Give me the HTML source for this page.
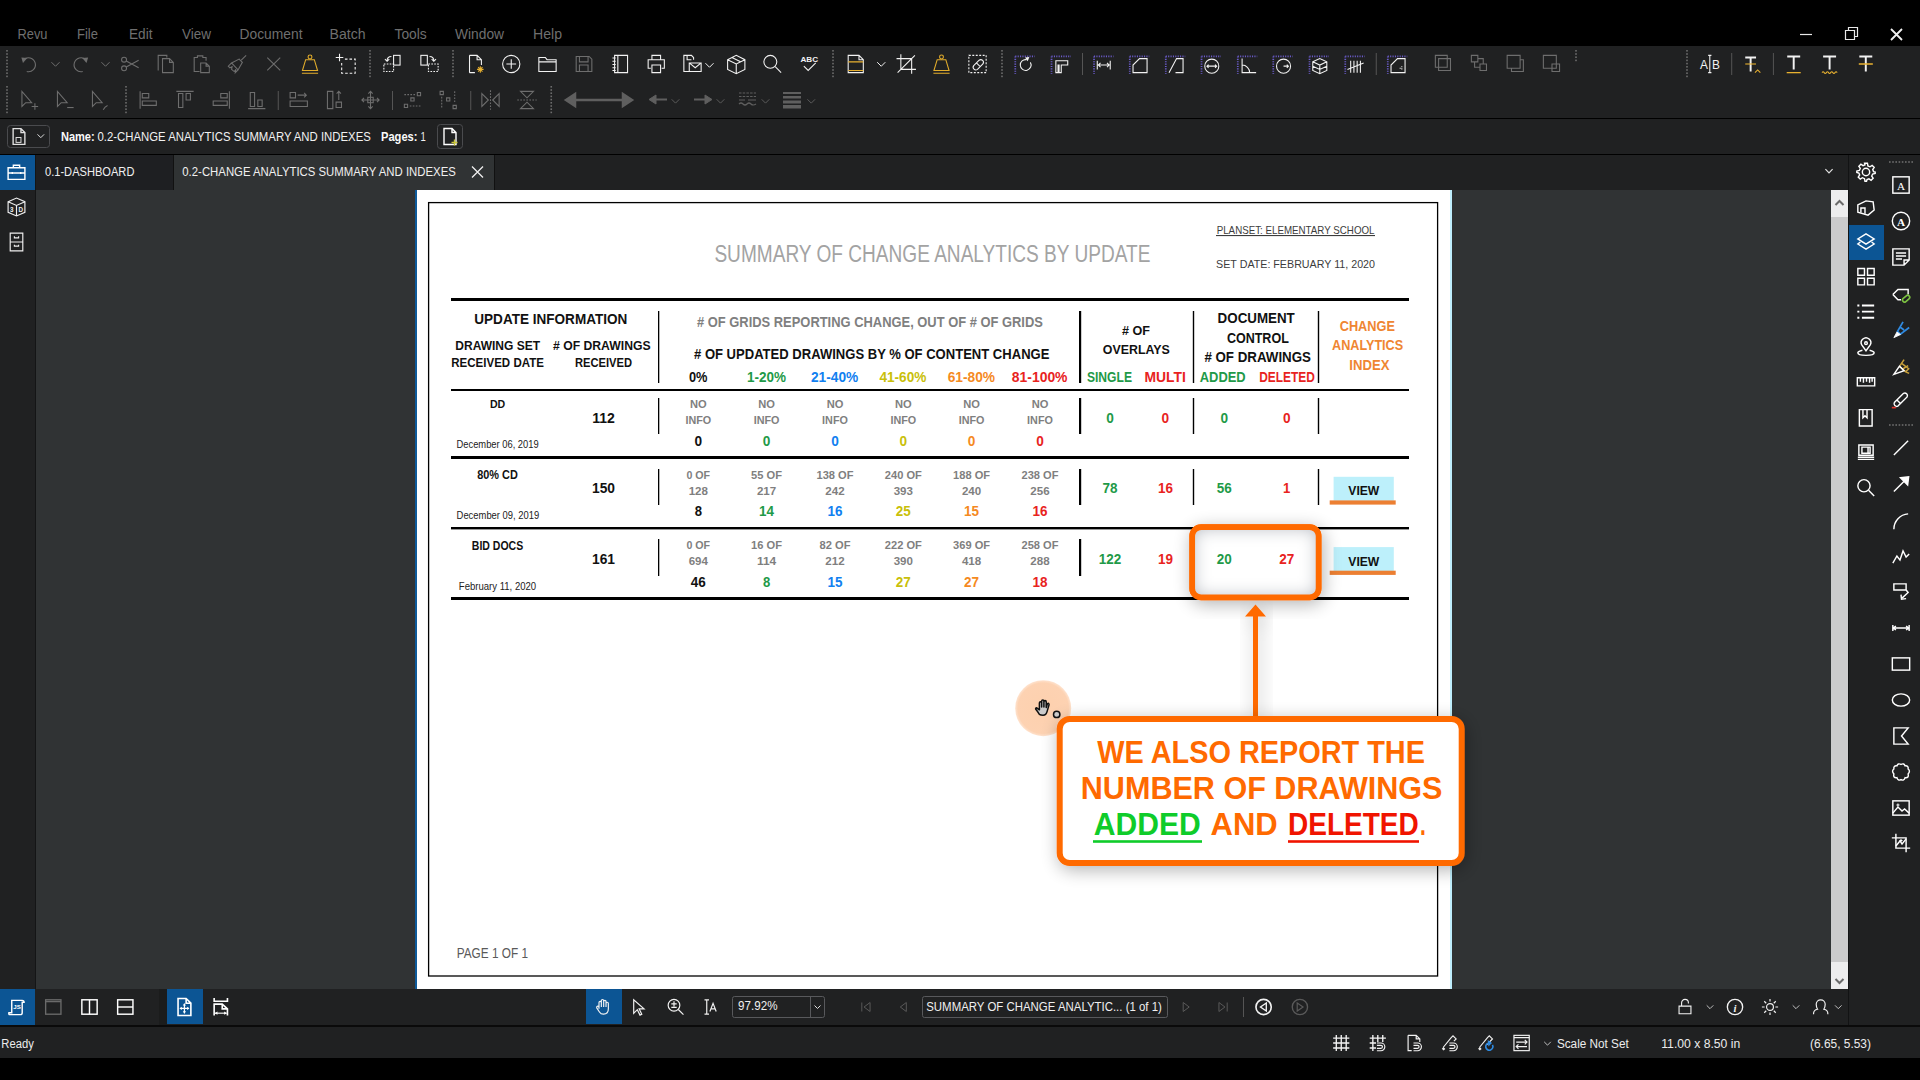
<!DOCTYPE html>
<html><head><meta charset="utf-8"><title>Revu</title>
<style>html,body{margin:0;padding:0;background:#000;width:1920px;height:1080px;overflow:hidden}svg{display:block}</style>
</head><body>
<svg width="1920" height="1080" viewBox="0 0 1920 1080">
<defs>
<filter id="shadow" x="-30%" y="-30%" width="160%" height="160%"><feGaussianBlur in="SourceAlpha" stdDeviation="9"/><feOffset dx="2" dy="4"/><feComponentTransfer><feFuncA type="linear" slope="0.3"/></feComponentTransfer><feMerge><feMergeNode/><feMergeNode in="SourceGraphic"/></feMerge></filter>
<filter id="inset" x="-30%" y="-30%" width="160%" height="160%"><feFlood flood-color="#b8bcc4" result="f"/><feComposite in="f" in2="SourceAlpha" operator="out" result="o"/><feGaussianBlur in="o" stdDeviation="8" result="b"/><feComposite in="b" in2="SourceAlpha" operator="in" result="i"/><feMerge><feMergeNode in="SourceGraphic"/><feMergeNode in="i"/></feMerge></filter>
</defs>
<rect x="0" y="0" width="1920" height="1080" fill="#000" />
<rect x="0" y="46" width="1920" height="72" fill="#202122" />
<rect x="0" y="118" width="1920" height="1" fill="#000" />
<rect x="0" y="119" width="1920" height="35" fill="#202122" />
<rect x="0" y="154" width="1920" height="1" fill="#000" />
<rect x="0" y="155" width="1848" height="35" fill="#202122" />
<rect x="0" y="155" width="1920" height="870" fill="#202122" />
<rect x="36" y="190" width="1795" height="799" fill="#303334" />
<rect x="35" y="155" width="1" height="834" fill="#141516" />
<rect x="1848" y="155" width="1" height="870" fill="#121314" />
<rect x="0" y="989" width="1848" height="36" fill="#202122" />
<rect x="0" y="1025" width="1920" height="2" fill="#0a0a0a" />
<rect x="0" y="1027" width="1920" height="31" fill="#202122" />
<rect x="0" y="1058" width="1920" height="22" fill="#000" />
<text x="17.50" y="39.30" font-family="Liberation Sans" font-size="14.24" font-weight="normal" fill="#6f6f6f" text-anchor="start" textLength="30.00" lengthAdjust="spacingAndGlyphs" >Revu</text>
<text x="77.00" y="39.30" font-family="Liberation Sans" font-size="14.24" font-weight="normal" fill="#6f6f6f" text-anchor="start" textLength="21.00" lengthAdjust="spacingAndGlyphs" >File</text>
<text x="129.00" y="39.30" font-family="Liberation Sans" font-size="14.24" font-weight="normal" fill="#6f6f6f" text-anchor="start" textLength="23.50" lengthAdjust="spacingAndGlyphs" >Edit</text>
<text x="182.00" y="39.30" font-family="Liberation Sans" font-size="14.24" font-weight="normal" fill="#6f6f6f" text-anchor="start" textLength="29.00" lengthAdjust="spacingAndGlyphs" >View</text>
<text x="239.50" y="39.30" font-family="Liberation Sans" font-size="14.24" font-weight="normal" fill="#6f6f6f" text-anchor="start" textLength="63.00" lengthAdjust="spacingAndGlyphs" >Document</text>
<text x="329.50" y="39.30" font-family="Liberation Sans" font-size="14.24" font-weight="normal" fill="#6f6f6f" text-anchor="start" textLength="36.00" lengthAdjust="spacingAndGlyphs" >Batch</text>
<text x="394.50" y="39.30" font-family="Liberation Sans" font-size="14.24" font-weight="normal" fill="#6f6f6f" text-anchor="start" textLength="32.25" lengthAdjust="spacingAndGlyphs" >Tools</text>
<text x="455.00" y="39.30" font-family="Liberation Sans" font-size="14.24" font-weight="normal" fill="#6f6f6f" text-anchor="start" textLength="49.00" lengthAdjust="spacingAndGlyphs" >Window</text>
<text x="533.00" y="39.30" font-family="Liberation Sans" font-size="14.24" font-weight="normal" fill="#6f6f6f" text-anchor="start" textLength="29.00" lengthAdjust="spacingAndGlyphs" >Help</text>
<path d="M1800 34.5 H1812" stroke="#e8e8e8" stroke-width="1.2"/>
<g fill="none" stroke="#e8e8e8" stroke-width="1.2"><path d="M1845.5 30.5 H1854.5 V39.5 H1845.5 Z M1848.5 30.5 V27.5 H1857.5 V36.5 H1854.5"/></g>
<path d="M1891 29 L1902 40 M1902 29 L1891 40" stroke="#f0f0f0" stroke-width="1.8"/>
<rect x="6.20" y="50.00" width="1.6" height="1.6" fill="#6d6d6d"/>
<rect x="6.20" y="53.20" width="1.6" height="1.6" fill="#6d6d6d"/>
<rect x="6.20" y="56.40" width="1.6" height="1.6" fill="#6d6d6d"/>
<rect x="6.20" y="59.60" width="1.6" height="1.6" fill="#6d6d6d"/>
<rect x="6.20" y="62.80" width="1.6" height="1.6" fill="#6d6d6d"/>
<rect x="6.20" y="66.00" width="1.6" height="1.6" fill="#6d6d6d"/>
<rect x="6.20" y="69.20" width="1.6" height="1.6" fill="#6d6d6d"/>
<rect x="6.20" y="72.40" width="1.6" height="1.6" fill="#6d6d6d"/>
<rect x="6.20" y="75.60" width="1.6" height="1.6" fill="#6d6d6d"/>
<g style="color:#6e6e6e"><g transform="translate(19.20,53.20) scale(1.08)" fill="none" stroke="#6e6e6e" stroke-width="1.0" stroke-linecap="butt" stroke-linejoin="miter"><path d="M4 6 A6.5 6.5 0 1 1 7 17"/><path d="M2 4 L7.5 4.5 L3.5 9 Z" fill="currentColor" stroke="none"/></g></g>
<g style="color:#6e6e6e"><g transform="translate(46.50,55.00) scale(0.9)" fill="none" stroke="#6e6e6e" stroke-width="1.1" stroke-linecap="butt" stroke-linejoin="miter"><path d="M5.5 8 L10 12.5 L14.5 8"/></g></g>
<g style="color:#6e6e6e"><g transform="translate(68.70,53.20) scale(1.08)" fill="none" stroke="#6e6e6e" stroke-width="1.0" stroke-linecap="butt" stroke-linejoin="miter"><path d="M16 6 A6.5 6.5 0 1 0 13 17"/><path d="M18 4 L12.5 4.5 L16.5 9 Z" fill="currentColor" stroke="none"/></g></g>
<g style="color:#6e6e6e"><g transform="translate(96.50,55.00) scale(0.9)" fill="none" stroke="#6e6e6e" stroke-width="1.1" stroke-linecap="butt" stroke-linejoin="miter"><path d="M5.5 8 L10 12.5 L14.5 8"/></g></g>
<g style="color:#6e6e6e"><g transform="translate(119.20,53.20) scale(1.08)" fill="none" stroke="#6e6e6e" stroke-width="1.0" stroke-linecap="butt" stroke-linejoin="miter"><circle cx="4.5" cy="6" r="2.3"/><circle cx="4.5" cy="14" r="2.3"/><path d="M6.5 7.2 L18 13.5 M6.5 12.8 L18 6.5"/></g></g>
<g style="color:#6e6e6e"><g transform="translate(154.95,53.20) scale(1.08)" fill="none" stroke="#6e6e6e" stroke-width="1.0" stroke-linecap="butt" stroke-linejoin="miter"><path d="M3 16 V2 H11 V4"/><path d="M7 5 H13.5 L17 8.5 V18 H7 Z M13.5 5 V8.5 H17"/></g></g>
<g style="color:#6e6e6e"><g transform="translate(190.95,53.20) scale(1.08)" fill="none" stroke="#6e6e6e" stroke-width="1.0" stroke-linecap="butt" stroke-linejoin="miter"><path d="M8 17 H3 V4 H6 V2.5 H11 V4 H14 V7"/><path d="M9 9 H14 L17 12 V18 H9 Z M14 9 V12 H17"/></g></g>
<g style="color:#6e6e6e"><g transform="translate(226.70,53.20) scale(1.08)" fill="none" stroke="#6e6e6e" stroke-width="1.0" stroke-linecap="butt" stroke-linejoin="miter"><path d="M18 2 L13.5 6.5 M11.5 5.5 L14.5 8.5 M4.5 9 L11.5 5.5 L14.5 8.5 L10.5 15.5 Z M4.5 9 L1.5 12 L3 13.5 L5 12.5 L4.5 15 L7 17 L8.5 15 L8 18 L10.5 15.5"/></g></g>
<g style="color:#6e6e6e"><g transform="translate(262.95,53.20) scale(1.08)" fill="none" stroke="#6e6e6e" stroke-width="1.0" stroke-linecap="butt" stroke-linejoin="miter"><path d="M4 4 L16 16 M16 4 L4 16"/></g></g>
<g style="color:#e2ad2c"><g transform="translate(299.20,53.20) scale(1.08)" fill="none" stroke="#e2ad2c" stroke-width="1.0" stroke-linecap="butt" stroke-linejoin="miter"><circle cx="10" cy="3.5" r="1.8"/><path d="M6 6 H14 L17 16 H3 Z M2.5 18.5 H17.5"/></g></g>
<g style="color:#f2f2f2"><g transform="translate(335.20,53.20) scale(1.08)" fill="none" stroke="#f2f2f2" stroke-width="1.0" stroke-linecap="butt" stroke-linejoin="miter"><path d="M4 0.5 V7.5 M0.5 4 H7.5" /><path d="M9 5.5 H18.5 V18.5 H6 V9" stroke-dasharray="2.4 1.8"/></g></g>
<g style="color:#f2f2f2"><g transform="translate(381.70,53.20) scale(1.08)" fill="none" stroke="#f2f2f2" stroke-width="1.0" stroke-linecap="butt" stroke-linejoin="miter"><rect x="11" y="2" width="6" height="9"/><path d="M2 10 H11 V17 H2 Z" stroke-dasharray="1.5 1.2"/><path d="M9 3 Q5 3 5 7 M3 5.5 L5 7.5 L7 5.5"/></g></g>
<g style="color:#f2f2f2"><g transform="translate(418.70,53.20) scale(1.08)" fill="none" stroke="#f2f2f2" stroke-width="1.0" stroke-linecap="butt" stroke-linejoin="miter"><rect x="2" y="2" width="6" height="9"/><path d="M9 10 H18 V17 H9 Z" stroke-dasharray="1.5 1.2"/><path d="M10 3 Q14 3 14 7 M12 5.5 L14 7.5 L16 5.5"/></g></g>
<g style="color:#f2f2f2"><g transform="translate(465.20,53.20) scale(1.08)" fill="none" stroke="#f2f2f2" stroke-width="1.0" stroke-linecap="butt" stroke-linejoin="miter"><path d="M4 2 H11 L15 6 V11 M9 18 H4 Z M4 2 V18 M11 2 V6 H15"/><path d="M14 12 V18 M11 15 H17 M12 13 L16 17 M16 13 L12 17" stroke="#e8b130"/></g></g>
<g style="color:#f2f2f2"><g transform="translate(500.45,53.20) scale(1.08)" fill="none" stroke="#f2f2f2" stroke-width="1.0" stroke-linecap="butt" stroke-linejoin="miter"><circle cx="10" cy="10" r="8"/><path d="M10 5.5 V14.5 M5.5 10 H14.5"/></g></g>
<g style="color:#f2f2f2"><g transform="translate(536.70,53.20) scale(1.08)" fill="none" stroke="#f2f2f2" stroke-width="1.0" stroke-linecap="butt" stroke-linejoin="miter"><path d="M2 4 H8 L9.5 6 H18 V17 H2 Z M2 8 H18"/></g></g>
<g style="color:#6e6e6e"><g transform="translate(572.95,53.20) scale(1.08)" fill="none" stroke="#6e6e6e" stroke-width="1.0" stroke-linecap="butt" stroke-linejoin="miter"><path d="M3 3 H15 L17.5 5.5 V17 H3 Z M6 3 V8 H14 V3 M6 17 V11 H14 V17"/></g></g>
<g style="color:#f2f2f2"><g transform="translate(609.20,53.20) scale(1.08)" fill="none" stroke="#f2f2f2" stroke-width="1.0" stroke-linecap="butt" stroke-linejoin="miter"><path d="M5 2 H17 V18 H5 Z M8 2 V18"/><path d="M3 4.5 H6 M3 7.5 H6 M3 10.5 H6 M3 13.5 H6 M3 16 H6"/></g></g>
<g style="color:#f2f2f2"><g transform="translate(645.45,53.20) scale(1.08)" fill="none" stroke="#f2f2f2" stroke-width="1.0" stroke-linecap="butt" stroke-linejoin="miter"><path d="M6 6 V2 H14 V6 M5 14 H2.5 V6 H17.5 V14 H15 M6 11 H14 V18 H6 Z"/></g></g>
<g style="color:#f2f2f2"><g transform="translate(681.70,53.20) scale(1.08)" fill="none" stroke="#f2f2f2" stroke-width="1.0" stroke-linecap="butt" stroke-linejoin="miter"><path d="M7 17 H2 V2 H9 L11 4 V6 M5 2 V6 H9"/><path d="M7 9 H18 V17 H7 Z M7 9 L12.5 13.5 L18 9"/></g></g>
<g style="color:#f2f2f2"><g transform="translate(725.45,53.20) scale(1.08)" fill="none" stroke="#f2f2f2" stroke-width="1.0" stroke-linecap="butt" stroke-linejoin="miter"><path d="M2 6 L10 2 L18 6 V15 L10 19 L2 15 Z M2 6 L10 10 L18 6 M10 10 V19 M6 4 L14 8"/></g></g>
<g style="color:#f2f2f2"><g transform="translate(761.70,53.20) scale(1.08)" fill="none" stroke="#f2f2f2" stroke-width="1.0" stroke-linecap="butt" stroke-linejoin="miter"><circle cx="8" cy="8" r="6"/><path d="M12.5 12.5 L18 18"/></g></g>
<g style="color:#f2f2f2"><g transform="translate(798.45,53.20) scale(1.08)" fill="none" stroke="#f2f2f2" stroke-width="1.0" stroke-linecap="butt" stroke-linejoin="miter"><text x="10" y="8" font-size="7.5" font-weight="bold" font-family="Liberation Sans" text-anchor="middle" fill="currentColor" stroke="none">ABC</text><path d="M5 12 L9 16 L16 9"/></g></g>
<g style="color:#f2f2f2"><g transform="translate(844.95,53.20) scale(1.08)" fill="none" stroke="#f2f2f2" stroke-width="1.0" stroke-linecap="butt" stroke-linejoin="miter"><path d="M3 2 H13 L17 6 V18 H3 Z M13 2 V6 H17"/><path d="M3 8 H17 M3 16 H17" stroke="#e8b130"/></g></g>
<g style="color:#f2f2f2"><g transform="translate(872.25,55.00) scale(0.9)" fill="none" stroke="#f2f2f2" stroke-width="1.1" stroke-linecap="butt" stroke-linejoin="miter"><path d="M5.5 8 L10 12.5 L14.5 8"/></g></g>
<g style="color:#f2f2f2"><g transform="translate(895.45,53.20) scale(1.08)" fill="none" stroke="#f2f2f2" stroke-width="1.0" stroke-linecap="butt" stroke-linejoin="miter"><path d="M5 1 V15 H19 M1 5 H15 V19 M18 2 L2 18"/></g></g>
<g style="color:#e2ad2c"><g transform="translate(930.70,53.20) scale(1.08)" fill="none" stroke="#e2ad2c" stroke-width="1.0" stroke-linecap="butt" stroke-linejoin="miter"><circle cx="10" cy="3.5" r="1.8"/><path d="M6 6 H14 L17 16 H3 Z M2.5 18.5 H17.5"/></g></g>
<g style="color:#f2f2f2"><g transform="translate(966.70,53.20) scale(1.08)" fill="none" stroke="#f2f2f2" stroke-width="1.0" stroke-linecap="butt" stroke-linejoin="miter"><path d="M2 2 H18 V18 H2 Z" stroke-dasharray="1.8 1.4"/><path d="M6.5 11.5 L11.5 6.5 A2.5 2.5 0 0 1 15 10 L10 15 A2.5 2.5 0 0 1 6.5 11.5 Z M9 9 L12.5 12.5"/></g></g>
<g style="color:#f2f2f2"><g transform="translate(1014.20,53.20) scale(1.08)" fill="none" stroke="#f2f2f2" stroke-width="1.0" stroke-linecap="butt" stroke-linejoin="miter"><path d="M1 3 V19 M1 3 H19" stroke="#6b5ccc" stroke-dasharray="1 1.2" stroke-width="1.6"/><path d="M15 8.5 A5 5 0 1 1 11.5 6"/><path d="M10 4 L14 3.5 L12.5 7.5 Z" fill="currentColor" stroke="none"/></g></g>
<g style="color:#f2f2f2"><g transform="translate(1050.45,53.20) scale(1.08)" fill="none" stroke="#f2f2f2" stroke-width="1.0" stroke-linecap="butt" stroke-linejoin="miter"><path d="M1 3 V19 M1 3 H19" stroke="#6b5ccc" stroke-dasharray="1 1.2" stroke-width="1.6"/><path d="M5 7 H16 V11 H10 V18 H8 V11 H7 V18 H5 Z"/></g></g>
<g style="color:#f2f2f2"><g transform="translate(1092.95,53.20) scale(1.08)" fill="none" stroke="#f2f2f2" stroke-width="1.0" stroke-linecap="butt" stroke-linejoin="miter"><path d="M1 3 V19 M1 3 H19" stroke="#6b5ccc" stroke-dasharray="1 1.2" stroke-width="1.6"/><path d="M4 7 V15 M16 7 V15 M5 11 H15 M7 9 L5 11 L7 13 M13 9 L15 11 L13 13"/></g></g>
<g style="color:#f2f2f2"><g transform="translate(1128.70,53.20) scale(1.08)" fill="none" stroke="#f2f2f2" stroke-width="1.0" stroke-linecap="butt" stroke-linejoin="miter"><path d="M1 3 V19 M1 3 H19" stroke="#6b5ccc" stroke-dasharray="1 1.2" stroke-width="1.6"/><path d="M4 18 V11 L10 5 H17 V18 Z"/></g></g>
<g style="color:#f2f2f2"><g transform="translate(1164.70,53.20) scale(1.08)" fill="none" stroke="#f2f2f2" stroke-width="1.0" stroke-linecap="butt" stroke-linejoin="miter"><path d="M1 3 V19 M1 3 H19" stroke="#6b5ccc" stroke-dasharray="1 1.2" stroke-width="1.6"/><path d="M4 18 L11 5 H17 V18 H10"/></g></g>
<g style="color:#f2f2f2"><g transform="translate(1200.45,53.20) scale(1.08)" fill="none" stroke="#f2f2f2" stroke-width="1.0" stroke-linecap="butt" stroke-linejoin="miter"><path d="M1 3 V19 M1 3 H19" stroke="#6b5ccc" stroke-dasharray="1 1.2" stroke-width="1.6"/><circle cx="10.5" cy="12" r="6.5"/><path d="M6 12 H15 M7.5 10.5 L6 12 L7.5 13.5 M13.5 10.5 L15 12 L13.5 13.5"/></g></g>
<g style="color:#f2f2f2"><g transform="translate(1236.70,53.20) scale(1.08)" fill="none" stroke="#f2f2f2" stroke-width="1.0" stroke-linecap="butt" stroke-linejoin="miter"><path d="M1 3 V19 M1 3 H19" stroke="#6b5ccc" stroke-dasharray="1 1.2" stroke-width="1.6"/><path d="M5 5 V18 H18 M5 11 A7 7 0 0 1 12 18"/></g></g>
<g style="color:#f2f2f2"><g transform="translate(1272.20,53.20) scale(1.08)" fill="none" stroke="#f2f2f2" stroke-width="1.0" stroke-linecap="butt" stroke-linejoin="miter"><path d="M1 3 V19 M1 3 H19" stroke="#6b5ccc" stroke-dasharray="1 1.2" stroke-width="1.6"/><circle cx="10.5" cy="12" r="6.5"/><path d="M10.5 12 H15 M13.5 10.5 L15 12 L13.5 13.5"/></g></g>
<g style="color:#f2f2f2"><g transform="translate(1308.45,53.20) scale(1.08)" fill="none" stroke="#f2f2f2" stroke-width="1.0" stroke-linecap="butt" stroke-linejoin="miter"><path d="M1 3 V19 M1 3 H19" stroke="#6b5ccc" stroke-dasharray="1 1.2" stroke-width="1.6"/><path d="M4 8 L10.5 5 L17 8 V16 L10.5 19 L4 16 Z M4 8 L10.5 11 L17 8 M10.5 11 V19 M4 12 L10.5 15 L17 12"/></g></g>
<g style="color:#f2f2f2"><g transform="translate(1344.20,53.20) scale(1.08)" fill="none" stroke="#f2f2f2" stroke-width="1.0" stroke-linecap="butt" stroke-linejoin="miter"><path d="M1 3 V19 M1 3 H19" stroke="#6b5ccc" stroke-dasharray="1 1.2" stroke-width="1.6"/><path d="M6 7 V18 M9 7 V18 M12 7 V18 M15 7 V18 M3 15 L18 9"/></g></g>
<g style="color:#f2f2f2"><g transform="translate(1386.70,53.20) scale(1.08)" fill="none" stroke="#f2f2f2" stroke-width="1.0" stroke-linecap="butt" stroke-linejoin="miter"><path d="M1 3 V19 M1 3 H19" stroke="#6b5ccc" stroke-dasharray="1 1.2" stroke-width="1.6"/><path d="M4 18 V11 L10 5 H17 V18 Z"/><path d="M12 14 H14 M14 12 V16" stroke-dasharray="1 1"/></g></g>
<g style="color:#6e6e6e"><g transform="translate(1433.20,53.20) scale(1.08)" fill="none" stroke="#6e6e6e" stroke-width="1.0" stroke-linecap="butt" stroke-linejoin="miter"><path d="M2 2 H13 V13 H2 Z M5 5 H16 V16 H5 Z"/></g></g>
<g style="color:#6e6e6e"><g transform="translate(1469.20,53.20) scale(1.08)" fill="none" stroke="#6e6e6e" stroke-width="1.0" stroke-linecap="butt" stroke-linejoin="miter"><path d="M2 2 H8 V8 H2 Z M10 10 H16 V16 H10 Z M5 8 V13 H10 M8 5 H13 V10"/></g></g>
<g style="color:#6e6e6e"><g transform="translate(1505.00,53.20) scale(1.08)" fill="none" stroke="#6e6e6e" stroke-width="1.0" stroke-linecap="butt" stroke-linejoin="miter"><path d="M2 2 H14 V14 H2 Z M14 6 H17 V17 H6 V14"/></g></g>
<g style="color:#6e6e6e"><g transform="translate(1541.20,53.20) scale(1.08)" fill="none" stroke="#6e6e6e" stroke-width="1.0" stroke-linecap="butt" stroke-linejoin="miter"><path d="M2 2 H14 V14 H2 Z M10 10 H17 V17 H10 Z"/></g></g>
<g style="color:#f2f2f2"><g transform="translate(1699.00,53.20) scale(1.08)" fill="none" stroke="#f2f2f2" stroke-width="1.0" stroke-linecap="butt" stroke-linejoin="miter"><text x="1" y="15" font-size="11" font-family="Liberation Sans" fill="currentColor" stroke="none">A</text><text x="12" y="15" font-size="11" font-family="Liberation Sans" fill="currentColor" stroke="none">B</text><path d="M8.5 2 H11.5 M10 2 V18 M8.5 18 H11.5"/></g></g>
<g style="color:#f2f2f2"><g transform="translate(1742.00,53.20) scale(1.08)" fill="none" stroke="#f2f2f2" stroke-width="1.0" stroke-linecap="butt" stroke-linejoin="miter"><path d="M3 4 H13 M8 4 V17" stroke-width="1.8"/><path d="M3 10 H13" stroke="#e8b130"/><path d="M12 18 L14.5 15.5 L17 18" stroke="#e8b130"/></g></g>
<g style="color:#f2f2f2"><g transform="translate(1782.90,53.20) scale(1.08)" fill="none" stroke="#f2f2f2" stroke-width="1.0" stroke-linecap="butt" stroke-linejoin="miter"><path d="M4 3 H16 M10 3 V15" stroke-width="1.8"/><path d="M3.5 18 H16.5" stroke="#e8b130" stroke-width="1.2"/></g></g>
<g style="color:#f2f2f2"><g transform="translate(1818.80,53.20) scale(1.08)" fill="none" stroke="#f2f2f2" stroke-width="1.0" stroke-linecap="butt" stroke-linejoin="miter"><path d="M4 3 H16 M10 3 V15" stroke-width="1.8"/><path d="M3 18 Q4 16.5 5 18 Q6 19.5 7 18 Q8 16.5 9 18 Q10 19.5 11 18 Q12 16.5 13 18 Q14 19.5 15 18 Q16 16.5 17 18" stroke="#e8b130" stroke-width="1"/></g></g>
<g style="color:#f2f2f2"><g transform="translate(1855.00,53.20) scale(1.08)" fill="none" stroke="#f2f2f2" stroke-width="1.0" stroke-linecap="butt" stroke-linejoin="miter"><path d="M4 3 H16 M10 3 V17" stroke-width="1.8"/><path d="M3.5 10 H16.5" stroke="#e8b130" stroke-width="1.4"/></g></g>
<g style="color:#f2f2f2"><g transform="translate(700.50,56.00) scale(0.9)" fill="none" stroke="#f2f2f2" stroke-width="1.1" stroke-linecap="butt" stroke-linejoin="miter"><path d="M5.5 8 L10 12.5 L14.5 8"/></g></g>
<rect x="369.20" y="50.00" width="1.6" height="1.6" fill="#6d6d6d"/>
<rect x="369.20" y="53.20" width="1.6" height="1.6" fill="#6d6d6d"/>
<rect x="369.20" y="56.40" width="1.6" height="1.6" fill="#6d6d6d"/>
<rect x="369.20" y="59.60" width="1.6" height="1.6" fill="#6d6d6d"/>
<rect x="369.20" y="62.80" width="1.6" height="1.6" fill="#6d6d6d"/>
<rect x="369.20" y="66.00" width="1.6" height="1.6" fill="#6d6d6d"/>
<rect x="369.20" y="69.20" width="1.6" height="1.6" fill="#6d6d6d"/>
<rect x="369.20" y="72.40" width="1.6" height="1.6" fill="#6d6d6d"/>
<rect x="369.20" y="75.60" width="1.6" height="1.6" fill="#6d6d6d"/>
<rect x="452.20" y="50.00" width="1.6" height="1.6" fill="#6d6d6d"/>
<rect x="452.20" y="53.20" width="1.6" height="1.6" fill="#6d6d6d"/>
<rect x="452.20" y="56.40" width="1.6" height="1.6" fill="#6d6d6d"/>
<rect x="452.20" y="59.60" width="1.6" height="1.6" fill="#6d6d6d"/>
<rect x="452.20" y="62.80" width="1.6" height="1.6" fill="#6d6d6d"/>
<rect x="452.20" y="66.00" width="1.6" height="1.6" fill="#6d6d6d"/>
<rect x="452.20" y="69.20" width="1.6" height="1.6" fill="#6d6d6d"/>
<rect x="452.20" y="72.40" width="1.6" height="1.6" fill="#6d6d6d"/>
<rect x="452.20" y="75.60" width="1.6" height="1.6" fill="#6d6d6d"/>
<rect x="832.20" y="50.00" width="1.6" height="1.6" fill="#6d6d6d"/>
<rect x="832.20" y="53.20" width="1.6" height="1.6" fill="#6d6d6d"/>
<rect x="832.20" y="56.40" width="1.6" height="1.6" fill="#6d6d6d"/>
<rect x="832.20" y="59.60" width="1.6" height="1.6" fill="#6d6d6d"/>
<rect x="832.20" y="62.80" width="1.6" height="1.6" fill="#6d6d6d"/>
<rect x="832.20" y="66.00" width="1.6" height="1.6" fill="#6d6d6d"/>
<rect x="832.20" y="69.20" width="1.6" height="1.6" fill="#6d6d6d"/>
<rect x="832.20" y="72.40" width="1.6" height="1.6" fill="#6d6d6d"/>
<rect x="832.20" y="75.60" width="1.6" height="1.6" fill="#6d6d6d"/>
<rect x="1001.20" y="50.00" width="1.6" height="1.6" fill="#6d6d6d"/>
<rect x="1001.20" y="53.20" width="1.6" height="1.6" fill="#6d6d6d"/>
<rect x="1001.20" y="56.40" width="1.6" height="1.6" fill="#6d6d6d"/>
<rect x="1001.20" y="59.60" width="1.6" height="1.6" fill="#6d6d6d"/>
<rect x="1001.20" y="62.80" width="1.6" height="1.6" fill="#6d6d6d"/>
<rect x="1001.20" y="66.00" width="1.6" height="1.6" fill="#6d6d6d"/>
<rect x="1001.20" y="69.20" width="1.6" height="1.6" fill="#6d6d6d"/>
<rect x="1001.20" y="72.40" width="1.6" height="1.6" fill="#6d6d6d"/>
<rect x="1001.20" y="75.60" width="1.6" height="1.6" fill="#6d6d6d"/>
<rect x="1575.20" y="50.00" width="1.6" height="1.6" fill="#6d6d6d"/>
<rect x="1575.20" y="53.20" width="1.6" height="1.6" fill="#6d6d6d"/>
<rect x="1575.20" y="56.40" width="1.6" height="1.6" fill="#6d6d6d"/>
<rect x="1575.20" y="59.60" width="1.6" height="1.6" fill="#6d6d6d"/>
<rect x="1686.20" y="50.00" width="1.6" height="1.6" fill="#6d6d6d"/>
<rect x="1686.20" y="53.20" width="1.6" height="1.6" fill="#6d6d6d"/>
<rect x="1686.20" y="56.40" width="1.6" height="1.6" fill="#6d6d6d"/>
<rect x="1686.20" y="59.60" width="1.6" height="1.6" fill="#6d6d6d"/>
<rect x="1686.20" y="62.80" width="1.6" height="1.6" fill="#6d6d6d"/>
<rect x="1686.20" y="66.00" width="1.6" height="1.6" fill="#6d6d6d"/>
<rect x="1686.20" y="69.20" width="1.6" height="1.6" fill="#6d6d6d"/>
<rect x="1686.20" y="72.40" width="1.6" height="1.6" fill="#6d6d6d"/>
<rect x="1686.20" y="75.60" width="1.6" height="1.6" fill="#6d6d6d"/>
<rect x="1082.0" y="53" width="1" height="22" fill="#555" />
<rect x="1375.75" y="53" width="1" height="22" fill="#555" />
<rect x="1731.2" y="53" width="1" height="22" fill="#555" />
<rect x="1772.9" y="53" width="1" height="22" fill="#555" />
<rect x="6.20" y="86.00" width="1.6" height="1.6" fill="#6d6d6d"/>
<rect x="6.20" y="89.20" width="1.6" height="1.6" fill="#6d6d6d"/>
<rect x="6.20" y="92.40" width="1.6" height="1.6" fill="#6d6d6d"/>
<rect x="6.20" y="95.60" width="1.6" height="1.6" fill="#6d6d6d"/>
<rect x="6.20" y="98.80" width="1.6" height="1.6" fill="#6d6d6d"/>
<rect x="6.20" y="102.00" width="1.6" height="1.6" fill="#6d6d6d"/>
<rect x="6.20" y="105.20" width="1.6" height="1.6" fill="#6d6d6d"/>
<rect x="6.20" y="108.40" width="1.6" height="1.6" fill="#6d6d6d"/>
<rect x="6.20" y="111.60" width="1.6" height="1.6" fill="#6d6d6d"/>
<rect x="125.20" y="86.00" width="1.6" height="1.6" fill="#6d6d6d"/>
<rect x="125.20" y="89.20" width="1.6" height="1.6" fill="#6d6d6d"/>
<rect x="125.20" y="92.40" width="1.6" height="1.6" fill="#6d6d6d"/>
<rect x="125.20" y="95.60" width="1.6" height="1.6" fill="#6d6d6d"/>
<rect x="125.20" y="98.80" width="1.6" height="1.6" fill="#6d6d6d"/>
<rect x="125.20" y="102.00" width="1.6" height="1.6" fill="#6d6d6d"/>
<rect x="125.20" y="105.20" width="1.6" height="1.6" fill="#6d6d6d"/>
<rect x="125.20" y="108.40" width="1.6" height="1.6" fill="#6d6d6d"/>
<rect x="125.20" y="111.60" width="1.6" height="1.6" fill="#6d6d6d"/>
<rect x="550.45" y="86.00" width="1.6" height="1.6" fill="#6d6d6d"/>
<rect x="550.45" y="89.20" width="1.6" height="1.6" fill="#6d6d6d"/>
<rect x="550.45" y="92.40" width="1.6" height="1.6" fill="#6d6d6d"/>
<rect x="550.45" y="95.60" width="1.6" height="1.6" fill="#6d6d6d"/>
<rect x="550.45" y="98.80" width="1.6" height="1.6" fill="#6d6d6d"/>
<rect x="550.45" y="102.00" width="1.6" height="1.6" fill="#6d6d6d"/>
<rect x="550.45" y="105.20" width="1.6" height="1.6" fill="#6d6d6d"/>
<rect x="550.45" y="108.40" width="1.6" height="1.6" fill="#6d6d6d"/>
<rect x="550.45" y="111.60" width="1.6" height="1.6" fill="#6d6d6d"/>
<g style="color:#6e6e6e"><g transform="translate(18.70,89.20) scale(1.08)" fill="none" stroke="#6e6e6e" stroke-width="1.0" stroke-linecap="butt" stroke-linejoin="miter"><path d="M3 2 V16 L6.5 12.5 H12 Z"/><path d="M15 13 V19 M12 16 H18"/></g></g>
<g style="color:#6e6e6e"><g transform="translate(54.20,89.20) scale(1.08)" fill="none" stroke="#6e6e6e" stroke-width="1.0" stroke-linecap="butt" stroke-linejoin="miter"><path d="M3 2 V16 L6.5 12.5 H12 Z"/><path d="M12 17 H18"/></g></g>
<g style="color:#6e6e6e"><g transform="translate(89.20,89.20) scale(1.08)" fill="none" stroke="#6e6e6e" stroke-width="1.0" stroke-linecap="butt" stroke-linejoin="miter"><path d="M3 2 V16 L6.5 12.5 H12 Z"/><path d="M13 19 Q14.5 16 17 15"/></g></g>
<g style="color:#6e6e6e"><g transform="translate(137.95,89.20) scale(1.08)" fill="none" stroke="#6e6e6e" stroke-width="1.0" stroke-linecap="butt" stroke-linejoin="miter"><path d="M2 2 V18 M4 4 H10 V8 H4 Z M4 11 H17 V15 H4 Z"/></g></g>
<g style="color:#6e6e6e"><g transform="translate(174.20,89.20) scale(1.08)" fill="none" stroke="#6e6e6e" stroke-width="1.0" stroke-linecap="butt" stroke-linejoin="miter"><path d="M2 2 H18 M4 4 H8 V17 H4 Z M11 4 H15 V10 H11 Z"/></g></g>
<g style="color:#6e6e6e"><g transform="translate(209.95,89.20) scale(1.08)" fill="none" stroke="#6e6e6e" stroke-width="1.0" stroke-linecap="butt" stroke-linejoin="miter"><path d="M18 2 V18 M10 4 H16 V8 H10 Z M3 11 H16 V15 H3 Z"/></g></g>
<g style="color:#6e6e6e"><g transform="translate(245.95,89.20) scale(1.08)" fill="none" stroke="#6e6e6e" stroke-width="1.0" stroke-linecap="butt" stroke-linejoin="miter"><path d="M2 18 H18 M4 3 H8 V16 H4 Z M11 10 H15 V16 H11 Z"/></g></g>
<g style="color:#6e6e6e"><g transform="translate(287.95,89.20) scale(1.08)" fill="none" stroke="#6e6e6e" stroke-width="1.0" stroke-linecap="butt" stroke-linejoin="miter"><path d="M2 3 H7 V8 H2 Z M2 11 H18 V16 H2 Z M9 5.5 H17 M15 3.5 L17 5.5 L15 7.5"/></g></g>
<g style="color:#6e6e6e"><g transform="translate(324.20,89.20) scale(1.08)" fill="none" stroke="#6e6e6e" stroke-width="1.0" stroke-linecap="butt" stroke-linejoin="miter"><path d="M3 2 H8 V18 H3 Z M11 12 H16 V17 H11 Z M13.5 10 V2 M11.5 4 L13.5 2 L15.5 4"/></g></g>
<g style="color:#6e6e6e"><g transform="translate(359.70,89.20) scale(1.08)" fill="none" stroke="#6e6e6e" stroke-width="1.0" stroke-linecap="butt" stroke-linejoin="miter"><path d="M10 2 V18 M2 10 H18 M8 4 L10 2 L12 4 M8 16 L10 18 L12 16 M4 8 L2 10 L4 12 M16 8 L18 10 L16 12" /><rect x="7.5" y="7.5" width="5" height="5"/></g></g>
<g style="color:#6e6e6e"><g transform="translate(402.20,89.20) scale(1.08)" fill="none" stroke="#6e6e6e" stroke-width="1.0" stroke-linecap="butt" stroke-linejoin="miter"><path d="M14 3 H17 V6 H14 Z M8 8 H11 V11 H8 Z M2 14 H5 V17 H2 Z"/><path d="M2 5 H12 M7 15.5 H18" stroke-dasharray="1.5 1.3"/></g></g>
<g style="color:#6e6e6e"><g transform="translate(437.95,89.20) scale(1.08)" fill="none" stroke="#6e6e6e" stroke-width="1.0" stroke-linecap="butt" stroke-linejoin="miter"><path d="M2 2 H5 V5 H2 Z M8 8 H11 V11 H8 Z M14 15 H17 V18 H14 Z"/><path d="M3.5 7 V17 M15.5 2 V13" stroke-dasharray="1.5 1.3"/></g></g>
<g style="color:#6e6e6e"><g transform="translate(479.70,89.20) scale(1.08)" fill="none" stroke="#6e6e6e" stroke-width="1.0" stroke-linecap="butt" stroke-linejoin="miter"><path d="M10 1 V19" stroke-dasharray="1.5 1.3"/><path d="M2 4 L8 10 L2 16 Z M18 4 L12 10 L18 16 Z"/></g></g>
<g style="color:#6e6e6e"><g transform="translate(516.20,89.20) scale(1.08)" fill="none" stroke="#6e6e6e" stroke-width="1.0" stroke-linecap="butt" stroke-linejoin="miter"><path d="M1 10 H19" stroke-dasharray="1.5 1.3"/><path d="M4 2 H16 L10 8 Z M4 18 H16 L10 12 Z"/></g></g>
<rect x="277.75" y="91" width="1" height="19" fill="#555" />
<rect x="392.0" y="91" width="1" height="19" fill="#555" />
<rect x="470.25" y="91" width="1" height="19" fill="#555" />
<g fill="#5f5f5f" stroke="#5f5f5f" stroke-width="2.5"><path d="M572 100 H626"/><path d="M566 100 L575 94 V106 Z"/><path d="M632 100 L623 94 V106 Z"/><path d="M652 99.5 H667" stroke-width="2"/><path d="M649 99.5 L656 95 V104 Z" stroke-width="1"/><path d="M694 99.5 H709" stroke-width="2"/><path d="M712 99.5 L705 95 V104 Z" stroke-width="1"/></g>
<g style="color:#5f5f5f"><g transform="translate(667.00,92.50) scale(0.85)" fill="none" stroke="#5f5f5f" stroke-width="1.1" stroke-linecap="butt" stroke-linejoin="miter"><path d="M5.5 8 L10 12.5 L14.5 8"/></g></g>
<g style="color:#5f5f5f"><g transform="translate(712.00,92.50) scale(0.85)" fill="none" stroke="#5f5f5f" stroke-width="1.1" stroke-linecap="butt" stroke-linejoin="miter"><path d="M5.5 8 L10 12.5 L14.5 8"/></g></g>
<g fill="none" stroke="#5f5f5f" stroke-width="1.2"><path d="M739 93 H756 M739 96.5 H756" stroke-dasharray="2.5 1.2"/><path d="M739 100 H745 M748 100 H756"/><path d="M739 104 Q741 102 743 104 Q745 106 747 104 Q749 102 751 104 Q753 106 756 104"/></g>
<g style="color:#5f5f5f"><g transform="translate(757.00,92.50) scale(0.85)" fill="none" stroke="#5f5f5f" stroke-width="1.1" stroke-linecap="butt" stroke-linejoin="miter"><path d="M5.5 8 L10 12.5 L14.5 8"/></g></g>
<g fill="#5f5f5f"><rect x="783" y="92" width="18" height="2"/><rect x="783" y="96" width="18" height="2.5"/><rect x="783" y="100.5" width="18" height="3"/><rect x="783" y="105" width="18" height="3.5"/></g>
<g style="color:#5f5f5f"><g transform="translate(802.75,92.50) scale(0.85)" fill="none" stroke="#5f5f5f" stroke-width="1.1" stroke-linecap="butt" stroke-linejoin="miter"><path d="M5.5 8 L10 12.5 L14.5 8"/></g></g>
<rect x="7.5" y="125.5" width="42" height="22" rx="3" fill="none" stroke="#4a4b4e" stroke-width="1"/>
<g style="color:#e0e0e0"><g transform="translate(9.20,126.70) scale(0.98)" fill="none" stroke="#e0e0e0" stroke-width="1.4" stroke-linecap="butt" stroke-linejoin="miter"><path d="M4 2 H12 L16 6 V18 H4 Z M12 2 V6 H16"/><rect x="7" y="11" width="5" height="5" stroke-width="1"/></g></g>
<g style="color:#e0e0e0"><g transform="translate(35.30,130.50) scale(0.55)" fill="none" stroke="#e0e0e0" stroke-width="1.8" stroke-linecap="butt" stroke-linejoin="miter"><path d="M4 7 L10 13 L16 7"/></g></g>
<text x="60.90" y="140.80" font-family="Liberation Sans" font-size="12.35" font-weight="bold" fill="#fafafa" text-anchor="start" textLength="33.80" lengthAdjust="spacingAndGlyphs" >Name:</text>
<text x="97.50" y="140.80" font-family="Liberation Sans" font-size="12.35" font-weight="normal" fill="#f2f2f2" text-anchor="start" textLength="273.30" lengthAdjust="spacingAndGlyphs" >0.2-CHANGE ANALYTICS SUMMARY AND INDEXES</text>
<text x="381.00" y="140.80" font-family="Liberation Sans" font-size="12.35" font-weight="bold" fill="#fafafa" text-anchor="start" textLength="36.50" lengthAdjust="spacingAndGlyphs" >Pages:</text>
<text x="420.50" y="140.80" font-family="Liberation Sans" font-size="12.35" font-weight="normal" fill="#f2f2f2" text-anchor="start" textLength="5.30" lengthAdjust="spacingAndGlyphs" >1</text>
<rect x="437.5" y="124.5" width="25" height="24" rx="3" fill="none" stroke="#4a4b4e" stroke-width="1"/>
<g style="color:#ffffff"><g transform="translate(440.00,126.50) scale(1.0)" fill="none" stroke="#ffffff" stroke-width="1.4" stroke-linecap="butt" stroke-linejoin="miter"><path d="M4 2 H12 L16 6 V18 H4 Z M12 2 V6 H16"/><path d="M14.5 13 V19 M11.5 16 H17.5" stroke="#c9c53a"/></g></g>
<rect x="0" y="155" width="35" height="35" fill="#0c5594" />
<g style="color:#ffffff"><g transform="translate(6.00,161.50) scale(1.05)" fill="none" stroke="#ffffff" stroke-width="1.35" stroke-linecap="butt" stroke-linejoin="miter"><path d="M2 6 H18 V17 H2 Z M7 6 V3.5 H13 V6 M2 11 H18 M6 10 V12 M14 10 V12"/></g></g>
<rect x="36" y="155" width="137" height="35" fill="#1e1f22" />
<rect x="173" y="155" width="1" height="35" fill="#111" />
<rect x="174" y="155" width="320" height="35" fill="#303334" />
<text x="45.00" y="176.00" font-family="Liberation Sans" font-size="12.50" font-weight="normal" fill="#f0f0f0" text-anchor="start" textLength="89.40" lengthAdjust="spacingAndGlyphs" >0.1-DASHBOARD</text>
<text x="182.30" y="176.00" font-family="Liberation Sans" font-size="12.50" font-weight="normal" fill="#f0f0f0" text-anchor="start" textLength="273.50" lengthAdjust="spacingAndGlyphs" >0.2-CHANGE ANALYTICS SUMMARY AND INDEXES</text>
<path d="M472 166.5 L483 177.5 M483 166.5 L472 177.5" stroke="#eee" stroke-width="1.3"/>
<rect x="494" y="155" width="1" height="35" fill="#111" />
<g style="color:#e0e0e0"><g transform="translate(1823.00,165.00) scale(0.6)" fill="none" stroke="#e0e0e0" stroke-width="2" stroke-linecap="butt" stroke-linejoin="miter"><path d="M4 7 L10 13 L16 7"/></g></g>
<g style="color:#f0f0f0"><g transform="translate(6.00,196.50) scale(1.05)" fill="none" stroke="#f0f0f0" stroke-width="1.1" stroke-linecap="butt" stroke-linejoin="miter"><path d="M2 5 L10 1.5 L18 5 V15 L10 18.5 L2 15 Z M2 5 L10 8.5 L18 5 M10 8.5 V18.5"/><text x="5.5" y="15" font-size="6" font-weight="bold" font-family="Liberation Sans" text-anchor="middle" fill="currentColor" stroke="none">3</text><text x="14" y="15" font-size="6" font-weight="bold" font-family="Liberation Sans" text-anchor="middle" fill="currentColor" stroke="none">D</text></g></g>
<g style="color:#f0f0f0"><g transform="translate(6.00,231.50) scale(1.05)" fill="none" stroke="#f0f0f0" stroke-width="1.1" stroke-linecap="butt" stroke-linejoin="miter"><path d="M4 1.5 H16 V18.5 H4 Z M4 10 H16 M8 4.5 V6 H12 V4.5 M8 12.5 V14 H12 V12.5"/></g></g>
<rect x="1849" y="225" width="35" height="35" fill="#0c5594" />
<g style="color:#ffffff"><g transform="translate(1855.80,161.80) scale(1.02)" fill="none" stroke="#ffffff" stroke-width="1.4" stroke-linecap="butt" stroke-linejoin="miter"><circle cx="10" cy="10" r="3.6"/><path d="M8.6 1.5 H11.4 L11.9 4 L13.9 4.9 L16 3.5 L18 5.5 L16.6 7.6 L17.4 9.6 L19 10 V11.4 L16.5 12 L15.6 14 L17 16.1 L15 18.1 L12.9 16.7 L11 17.5 L10.5 19 H9 L8.5 16.5 L6.5 15.6 L4.4 17 L2.4 15 L3.8 12.9 L3 11 L1 10.5 V9 L3.5 8.5 L4.4 6.5 L3 4.4 L5 2.4 L7.1 3.8 L9 3 Z"/></g></g>
<g style="color:#ffffff"><g transform="translate(1855.80,196.80) scale(1.02)" fill="none" stroke="#ffffff" stroke-width="1.4" stroke-linecap="butt" stroke-linejoin="miter"><path d="M2 8 L10 4 L17 5 L18 13 L12 18 L2 15 Z"/><path d="M5 15.5 V11 H9 V16.5"/></g></g>
<g style="color:#ffffff"><g transform="translate(1855.80,231.80) scale(1.02)" fill="none" stroke="#ffffff" stroke-width="1.4" stroke-linecap="butt" stroke-linejoin="miter"><path d="M10 2 L18 7 L10 12 L2 7 Z"/><path d="M4.5 10 L2 12 L10 17 L18 12 L15.5 10"/></g></g>
<g style="color:#ffffff"><g transform="translate(1855.80,266.50) scale(1.02)" fill="none" stroke="#ffffff" stroke-width="1.4" stroke-linecap="butt" stroke-linejoin="miter"><path d="M2 2 H8.5 V8.5 H2 Z M11.5 2 H18 V8.5 H11.5 Z M2 11.5 H8.5 V18 H2 Z M11.5 11.5 H18 V18 H11.5 Z"/></g></g>
<g style="color:#ffffff"><g transform="translate(1855.80,301.40) scale(1.02)" fill="none" stroke="#ffffff" stroke-width="1.4" stroke-linecap="butt" stroke-linejoin="miter"><path d="M6 4 H18 M6 10 H18 M6 16 H18" stroke-width="1.8"/><path d="M1.5 4 H3.5 M1.5 10 H3.5 M1.5 16 H3.5" stroke-width="1.8"/></g></g>
<g style="color:#ffffff"><g transform="translate(1855.80,336.50) scale(1.02)" fill="none" stroke="#ffffff" stroke-width="1.4" stroke-linecap="butt" stroke-linejoin="miter"><path d="M10 14 L6 8.5 A4.7 4.7 0 1 1 14 8.5 Z"/><circle cx="10" cy="6.5" r="1.3"/><path d="M6.5 13.5 Q2 14.5 2 16 Q2 18.5 10 18.5 Q18 18.5 18 16 Q18 14.5 13.5 13.5"/></g></g>
<g style="color:#ffffff"><g transform="translate(1855.80,371.60) scale(1.02)" fill="none" stroke="#ffffff" stroke-width="1.4" stroke-linecap="butt" stroke-linejoin="miter"><path d="M1.5 6 H18.5 V14 H1.5 Z M4.5 6 V10 M7.5 6 V11 M10.5 6 V10 M13.5 6 V11 M16 6 V10"/></g></g>
<g style="color:#ffffff"><g transform="translate(1855.80,407.60) scale(1.02)" fill="none" stroke="#ffffff" stroke-width="1.4" stroke-linecap="butt" stroke-linejoin="miter"><path d="M3.5 2 H16 V18 H3.5 Z M7 2 V10 L9 8 L11 10 V2"/></g></g>
<g style="color:#ffffff"><g transform="translate(1855.80,442.00) scale(1.02)" fill="none" stroke="#ffffff" stroke-width="1.4" stroke-linecap="butt" stroke-linejoin="miter"><path d="M3 3 H17 V13 H3 Z M6 5 H14 V11 H6 Z M12 5 V11 M2 15 H18 M2 17 H18"/></g></g>
<g style="color:#ffffff"><g transform="translate(1855.80,477.60) scale(1.02)" fill="none" stroke="#ffffff" stroke-width="1.4" stroke-linecap="butt" stroke-linejoin="miter"><circle cx="8" cy="8" r="6"/><path d="M12.5 12.5 L18 18"/></g></g>
<rect x="1889.00" y="161.20" width="1.6" height="1.6" fill="#6d6d6d"/>
<rect x="1892.20" y="161.20" width="1.6" height="1.6" fill="#6d6d6d"/>
<rect x="1895.40" y="161.20" width="1.6" height="1.6" fill="#6d6d6d"/>
<rect x="1898.60" y="161.20" width="1.6" height="1.6" fill="#6d6d6d"/>
<rect x="1901.80" y="161.20" width="1.6" height="1.6" fill="#6d6d6d"/>
<rect x="1905.00" y="161.20" width="1.6" height="1.6" fill="#6d6d6d"/>
<rect x="1908.20" y="161.20" width="1.6" height="1.6" fill="#6d6d6d"/>
<rect x="1911.40" y="161.20" width="1.6" height="1.6" fill="#6d6d6d"/>
<g style="color:#ffffff"><g transform="translate(1890.80,174.80) scale(1.02)" fill="none" stroke="#ffffff" stroke-width="1.4" stroke-linecap="butt" stroke-linejoin="miter"><rect x="2" y="2" width="16" height="16"/><text x="10" y="14.5" font-size="11" font-family="Liberation Serif" text-anchor="middle" fill="currentColor" stroke="none">A</text></g></g>
<g style="color:#ffffff"><g transform="translate(1890.80,210.80) scale(1.02)" fill="none" stroke="#ffffff" stroke-width="1.4" stroke-linecap="butt" stroke-linejoin="miter"><circle cx="10" cy="10" r="8.5"/><text x="10" y="15" font-size="11" font-weight="bold" font-family="Liberation Serif" text-anchor="middle" fill="currentColor" stroke="none">A</text></g></g>
<g style="color:#ffffff"><g transform="translate(1890.80,246.80) scale(1.02)" fill="none" stroke="#ffffff" stroke-width="1.4" stroke-linecap="butt" stroke-linejoin="miter"><path d="M2 2 H18 V13 L13 18 H2 Z M13 18 V13 H18 M5 6 H15 M5 9 H15 M5 12 H11"/></g></g>
<g style="color:#ffffff"><g transform="translate(1890.80,285.40) scale(1.02)" fill="none" stroke="#ffffff" stroke-width="1.4" stroke-linecap="butt" stroke-linejoin="miter"><path d="M2 9 L7 4 H17 V9"/><path d="M2 9 L7 14 H10"/><rect x="11" y="11" width="8" height="4" rx="2" transform="rotate(-40 15 13)" stroke="#7cc242" stroke-width="1.6"/></g></g>
<g style="color:#ffffff"><g transform="translate(1890.80,319.80) scale(1.02)" fill="none" stroke="#ffffff" stroke-width="1.4" stroke-linecap="butt" stroke-linejoin="miter"><path d="M12 2 L6.5 11.5 L9.5 14 L18 7.5 M9 7 L13 10" stroke="#2f8ae0" stroke-width="1.7"/><path d="M6 12 L3 17.5 L9.5 14.5 Z" fill="#fff" stroke="#fff" stroke-width="0.8"/></g></g>
<g style="color:#ffffff"><g transform="translate(1890.80,356.50) scale(1.02)" fill="none" stroke="#ffffff" stroke-width="1.4" stroke-linecap="butt" stroke-linejoin="miter"><path d="M9 9 L13 3 M8.5 9.5 L14.5 15 L17.5 12 L11 7 M12 12 L17 9 M14.5 15 L18 16.5" stroke="#c9a13a" stroke-width="1.5"/><path d="M3 17.5 L8.5 9.5 L13 14 Z" fill="none" stroke="#fff" stroke-width="1.4"/></g></g>
<g style="color:#ffffff"><g transform="translate(1890.80,390.80) scale(1.02)" fill="none" stroke="#ffffff" stroke-width="1.4" stroke-linecap="butt" stroke-linejoin="miter"><path d="M7 15 L16 6 A2.6 2.6 0 0 0 12.5 2.5 L3.5 11.5 A2.6 2.6 0 0 0 7 15 Z M6 9 L10 13"/><path d="M1 16.5 H5" stroke="#e2332a" stroke-width="1.6"/></g></g>
<g style="color:#ffffff"><g transform="translate(1890.80,437.60) scale(1.02)" fill="none" stroke="#ffffff" stroke-width="1.4" stroke-linecap="butt" stroke-linejoin="miter"><path d="M3 17 L17 3"/></g></g>
<g style="color:#ffffff"><g transform="translate(1890.80,474.20) scale(1.02)" fill="none" stroke="#ffffff" stroke-width="1.4" stroke-linecap="butt" stroke-linejoin="miter"><path d="M3 17 L15 5"/><path d="M9.5 3.5 L17.5 2.5 L16.5 10.5 Z" fill="currentColor"/></g></g>
<g style="color:#ffffff"><g transform="translate(1890.80,510.80) scale(1.02)" fill="none" stroke="#ffffff" stroke-width="1.4" stroke-linecap="butt" stroke-linejoin="miter"><path d="M3 18 A15 15 0 0 1 17 3"/></g></g>
<g style="color:#ffffff"><g transform="translate(1890.80,545.80) scale(1.02)" fill="none" stroke="#ffffff" stroke-width="1.4" stroke-linecap="butt" stroke-linejoin="miter"><path d="M2 17 L6 10 L9 14 L12 5 L15 11 L18 8"/></g></g>
<g style="color:#ffffff"><g transform="translate(1890.80,581.80) scale(1.02)" fill="none" stroke="#ffffff" stroke-width="1.4" stroke-linecap="butt" stroke-linejoin="miter"><path d="M3 2 H15 V8 H3 Z M15 8 L17 10.5 L11 16"/><path d="M10 12.5 L10.5 17 L15 16.5"/></g></g>
<g style="color:#ffffff"><g transform="translate(1890.80,617.80) scale(1.02)" fill="none" stroke="#ffffff" stroke-width="1.4" stroke-linecap="butt" stroke-linejoin="miter"><path d="M2 7 V13 M18 7 V13 M2 10 H18 M5 8 L2.5 10 L5 12 M15 8 L17.5 10 L15 12"/></g></g>
<g style="color:#ffffff"><g transform="translate(1890.80,653.80) scale(1.02)" fill="none" stroke="#ffffff" stroke-width="1.4" stroke-linecap="butt" stroke-linejoin="miter"><rect x="1.5" y="4" width="17" height="12"/></g></g>
<g style="color:#ffffff"><g transform="translate(1890.80,689.80) scale(1.02)" fill="none" stroke="#ffffff" stroke-width="1.4" stroke-linecap="butt" stroke-linejoin="miter"><ellipse cx="10" cy="10" rx="8.5" ry="6"/></g></g>
<g style="color:#ffffff"><g transform="translate(1890.80,725.80) scale(1.02)" fill="none" stroke="#ffffff" stroke-width="1.4" stroke-linecap="butt" stroke-linejoin="miter"><path d="M3 2 H17 L10.5 10 L17 18 H3 Z"/></g></g>
<g style="color:#ffffff"><g transform="translate(1890.80,761.80) scale(1.02)" fill="none" stroke="#ffffff" stroke-width="1.4" stroke-linecap="butt" stroke-linejoin="miter"><path d="M10 2.5 Q13 1 14 4 Q17.5 3.5 17 7 Q19.5 9 17 12 Q18 16 14 15.5 Q13 19 10 17.5 Q7 19 6 15.5 Q2 16 3 12 Q0.5 9 3 7 Q2.5 3.5 6 4 Q7 1 10 2.5 Z"/></g></g>
<g style="color:#ffffff"><g transform="translate(1890.80,797.80) scale(1.02)" fill="none" stroke="#ffffff" stroke-width="1.4" stroke-linecap="butt" stroke-linejoin="miter"><rect x="2" y="3" width="16" height="14"/><path d="M2 15 L7 9 L11 13 L13.5 11 L18 15"/><path d="M7 5.5 V8.5 M5.5 7 H8.5" stroke-width="1"/></g></g>
<g style="color:#ffffff"><g transform="translate(1890.80,832.80) scale(1.02)" fill="none" stroke="#ffffff" stroke-width="1.4" stroke-linecap="butt" stroke-linejoin="miter"><path d="M5 1 V15 H19 M1 5 H15 V19"/><path d="M5 13 L9 8 L11 11 L15 6"/><path d="M10 6 V9 M8.5 7.5 H11.5" stroke-width="1"/></g></g>
<rect x="1889.00" y="424.20" width="1.6" height="1.6" fill="#6d6d6d"/>
<rect x="1892.20" y="424.20" width="1.6" height="1.6" fill="#6d6d6d"/>
<rect x="1895.40" y="424.20" width="1.6" height="1.6" fill="#6d6d6d"/>
<rect x="1898.60" y="424.20" width="1.6" height="1.6" fill="#6d6d6d"/>
<rect x="1901.80" y="424.20" width="1.6" height="1.6" fill="#6d6d6d"/>
<rect x="1905.00" y="424.20" width="1.6" height="1.6" fill="#6d6d6d"/>
<rect x="1908.20" y="424.20" width="1.6" height="1.6" fill="#6d6d6d"/>
<rect x="1911.40" y="424.20" width="1.6" height="1.6" fill="#6d6d6d"/>
<rect x="1831" y="190" width="17" height="799" fill="#cbcbcc" />
<rect x="1831" y="190" width="17" height="27" fill="#ededee" />
<rect x="1831" y="962" width="17" height="27" fill="#ededee" />
<path d="M1835.5 205 L1839.5 201 L1843.5 205" fill="none" stroke="#6a6a6a" stroke-width="2"/>
<path d="M1835.5 979 L1839.5 983 L1843.5 979" fill="none" stroke="#6a6a6a" stroke-width="2"/>
<rect x="0" y="989" width="35" height="36" fill="#0c5594" />
<g style="color:#ffffff"><g transform="translate(7.00,997.50) scale(0.95)" fill="none" stroke="#ffffff" stroke-width="1.5" stroke-linecap="butt" stroke-linejoin="miter"><path d="M5 3 H16 Q18 3 18 5 H16 V16 Q16 18 14 18 H3 Q1.5 18 2 16 H5 Z"/><text x="10.5" y="12" font-size="6.5" font-weight="bold" font-family="Liberation Sans" text-anchor="middle" fill="currentColor" stroke="none">JS</text></g></g>
<g style="color:#6a6a6a"><g transform="translate(44.30,998.00) scale(0.9)" fill="none" stroke="#6a6a6a" stroke-width="1.5" stroke-linecap="butt" stroke-linejoin="miter"><rect x="1.5" y="2" width="17" height="16"/><path d="M1.5 4 H18.5"/></g></g>
<g style="color:#ffffff"><g transform="translate(80.50,998.00) scale(0.9)" fill="none" stroke="#ffffff" stroke-width="1.6" stroke-linecap="butt" stroke-linejoin="miter"><rect x="1.5" y="2" width="17" height="16"/><path d="M10 2 V18"/></g></g>
<g style="color:#ffffff"><g transform="translate(116.30,998.00) scale(0.9)" fill="none" stroke="#ffffff" stroke-width="1.6" stroke-linecap="butt" stroke-linejoin="miter"><rect x="1.5" y="2" width="17" height="16"/><path d="M1.5 10 H18.5"/></g></g>
<rect x="159" y="989" width="8" height="36" fill="#1b1c1c" />
<rect x="167" y="989" width="36" height="35" fill="#0c5594" />
<g style="color:#ffffff"><g transform="translate(175.20,997.50) scale(0.95)" fill="none" stroke="#ffffff" stroke-width="1.7" stroke-linecap="butt" stroke-linejoin="miter"><path d="M3 1 H11.5 L16.5 6 V19 H3 Z M11.5 1 V6 H16.5"/><path d="M9.7 6.5 V16.5 M5 11.5 H14.5" stroke-width="1.3"/><path d="M9.7 6 L8 8.5 H11.4 Z M9.7 17 L8 14.5 H11.4 Z M4.5 11.5 L7 9.8 V13.2 Z M15 11.5 L12.5 9.8 V13.2 Z" fill="currentColor" stroke="none"/></g></g>
<g style="color:#ffffff"><g transform="translate(211.30,997.50) scale(0.95)" fill="none" stroke="#ffffff" stroke-width="1.7" stroke-linecap="butt" stroke-linejoin="miter"><path d="M3 0.5 V4 H17 V0.5"/><path d="M3 19 V7 H11.5 L17 12 V19 M11.5 7 V12 H17"/><path d="M4 16.5 H16" stroke-width="1.2"/><path d="M3.5 16.5 L6.5 14.8 V18.2 Z M16.5 16.5 L13.5 14.8 V18.2 Z" fill="currentColor" stroke="none"/></g></g>
<rect x="586" y="989" width="36" height="35" fill="#0c5594" />
<g style="color:#f2f2f2"><g transform="translate(594.50,998.00) scale(0.9)" fill="none" stroke="#f2f2f2" stroke-width="1.3" stroke-linecap="butt" stroke-linejoin="miter"><path d="M5 12 V5 A1.3 1.3 0 0 1 7.6 5 V10 V3 A1.3 1.3 0 0 1 10.2 3 V10 V4 A1.3 1.3 0 0 1 12.8 4 V10 V6 A1.3 1.3 0 0 1 15.4 6 V12 Q15.4 18 10 18 Q7 18 5.5 15.5 L2.5 11 A1.3 1.3 0 0 1 4.8 9.8 Z"/></g></g>
<g style="color:#f2f2f2"><g transform="translate(631.00,998.00) scale(0.9)" fill="none" stroke="#f2f2f2" stroke-width="1.3" stroke-linecap="butt" stroke-linejoin="miter"><path d="M3 2 V17 L7 13 L10 19 L12 18 L9 12 H14.5 Z"/></g></g>
<g style="color:#f2f2f2"><g transform="translate(666.80,998.00) scale(0.9)" fill="none" stroke="#f2f2f2" stroke-width="1.3" stroke-linecap="butt" stroke-linejoin="miter"><circle cx="8" cy="8" r="6.5"/><path d="M12.8 12.8 L18.5 18.5 M5 6.5 H11 M8 3.5 V9.5 M5 10.5 H11"/></g></g>
<g style="color:#f2f2f2"><g transform="translate(701.80,998.00) scale(0.9)" fill="none" stroke="#f2f2f2" stroke-width="1.3" stroke-linecap="butt" stroke-linejoin="miter"><path d="M3 2 H8 M5.5 2 V18 M3 18 H8"/><path d="M9 15 L12.5 6 L16 15 M10.2 12 H14.8"/></g></g>
<rect x="732.5" y="996.5" width="92" height="21" rx="2" fill="none" stroke="#58595c" stroke-width="1"/>
<rect x="810" y="997" width="1" height="20" fill="#58595c" />
<text x="738.00" y="1010.30" font-family="Liberation Sans" font-size="13.23" font-weight="normal" fill="#f0f0f0" text-anchor="start" textLength="39.50" lengthAdjust="spacingAndGlyphs" >97.92%</text>
<g style="color:#e0e0e0"><g transform="translate(812.50,1002.00) scale(0.5)" fill="none" stroke="#e0e0e0" stroke-width="2" stroke-linecap="butt" stroke-linejoin="miter"><path d="M4 7 L10 13 L16 7"/></g></g>
<g style="color:#5a5a5a"><g transform="translate(858.80,999.50) scale(0.75)" fill="none" stroke="#5a5a5a" stroke-width="1.3" stroke-linecap="butt" stroke-linejoin="miter"><path d="M4 4 V16 M15 4 L7 10 L15 16 Z"/></g></g>
<g style="color:#5a5a5a"><g transform="translate(895.80,999.50) scale(0.75)" fill="none" stroke="#5a5a5a" stroke-width="1.3" stroke-linecap="butt" stroke-linejoin="miter"><path d="M14 4 L6 10 L14 16 Z"/></g></g>
<rect x="922.5" y="996.5" width="245" height="21" rx="2" fill="none" stroke="#58595c" stroke-width="1"/>
<text x="926.25" y="1010.60" font-family="Liberation Sans" font-size="13.66" font-weight="normal" fill="#f0f0f0" text-anchor="start" textLength="235.60" lengthAdjust="spacingAndGlyphs" >SUMMARY OF CHANGE ANALYTIC... (1 of 1)</text>
<g style="color:#5a5a5a"><g transform="translate(1178.70,999.50) scale(0.75)" fill="none" stroke="#5a5a5a" stroke-width="1.3" stroke-linecap="butt" stroke-linejoin="miter"><path d="M6 4 L14 10 L6 16 Z"/></g></g>
<g style="color:#5a5a5a"><g transform="translate(1215.20,999.50) scale(0.75)" fill="none" stroke="#5a5a5a" stroke-width="1.3" stroke-linecap="butt" stroke-linejoin="miter"><path d="M16 4 V16 M5 4 L13 10 L5 16 Z"/></g></g>
<rect x="1243" y="997" width="1" height="20" fill="#555" />
<g style="color:#f2f2f2"><g transform="translate(1254.60,998.00) scale(0.9)" fill="none" stroke="#f2f2f2" stroke-width="1.3" stroke-linecap="butt" stroke-linejoin="miter"><circle cx="10" cy="10" r="8.5" stroke-width="1.8"/><path d="M13 5.5 L6.5 10 L13 14.5 Z" stroke-width="1.5"/></g></g>
<g style="color:#5a5a5a"><g transform="translate(1290.90,998.00) scale(0.9)" fill="none" stroke="#5a5a5a" stroke-width="1.3" stroke-linecap="butt" stroke-linejoin="miter"><circle cx="10" cy="10" r="8.5" stroke-width="1.5"/><path d="M7 5.5 L13.5 10 L7 14.5 Z"/></g></g>
<g style="color:#f2f2f2"><g transform="translate(1676.50,998.50) scale(0.85)" fill="none" stroke="#f2f2f2" stroke-width="1.3" stroke-linecap="butt" stroke-linejoin="miter"><path d="M3 9 H17 V18 H3 Z M6 9 V5 A4 4 0 0 1 14 5 V6"/></g></g>
<g style="color:#e0e0e0"><g transform="translate(1704.50,1001.50) scale(0.55)" fill="none" stroke="#e0e0e0" stroke-width="1.5" stroke-linecap="butt" stroke-linejoin="miter"><path d="M4 7 L10 13 L16 7"/></g></g>
<g style="color:#f2f2f2"><g transform="translate(1726.00,998.00) scale(0.9)" fill="none" stroke="#f2f2f2" stroke-width="1.3" stroke-linecap="butt" stroke-linejoin="miter"><circle cx="10" cy="10" r="8.5" stroke-width="1.5"/><text x="10" y="15" font-size="12" font-style="italic" font-weight="bold" font-family="Liberation Serif" text-anchor="middle" fill="currentColor" stroke="none">i</text></g></g>
<g style="color:#f2f2f2"><g transform="translate(1761.00,998.00) scale(0.9)" fill="none" stroke="#f2f2f2" stroke-width="1.3" stroke-linecap="butt" stroke-linejoin="miter"><circle cx="10" cy="10" r="3.8"/><path d="M10 1 V4 M10 16 V19 M1 10 H4 M16 10 H19 M3.6 3.6 L5.8 5.8 M14.2 14.2 L16.4 16.4 M3.6 16.4 L5.8 14.2 M14.2 5.8 L16.4 3.6"/></g></g>
<g style="color:#e0e0e0"><g transform="translate(1790.50,1001.50) scale(0.55)" fill="none" stroke="#e0e0e0" stroke-width="1.5" stroke-linecap="butt" stroke-linejoin="miter"><path d="M4 7 L10 13 L16 7"/></g></g>
<g style="color:#f2f2f2"><g transform="translate(1811.70,998.00) scale(0.9)" fill="none" stroke="#f2f2f2" stroke-width="1.3" stroke-linecap="butt" stroke-linejoin="miter"><path d="M2 18 Q2 13 6.5 12.5 Q5 10 5 7 A5 5 0 0 1 15 7 Q15 10 13.5 12.5 Q18 13 18 18"/></g></g>
<g style="color:#e0e0e0"><g transform="translate(1832.80,1001.50) scale(0.55)" fill="none" stroke="#e0e0e0" stroke-width="1.5" stroke-linecap="butt" stroke-linejoin="miter"><path d="M4 7 L10 13 L16 7"/></g></g>
<text x="1.30" y="1048.30" font-family="Liberation Sans" font-size="13.23" font-weight="normal" fill="#ececec" text-anchor="start" textLength="32.50" lengthAdjust="spacingAndGlyphs" >Ready</text>
<g style="color:#f2f2f2"><g transform="translate(1332.25,1034.00) scale(0.9)" fill="none" stroke="#f2f2f2" stroke-width="1.3" stroke-linecap="butt" stroke-linejoin="miter"><path d="M4.5 1 V19 M10 1 V19 M15.5 1 V19 M1 4.5 H19 M1 10 H19 M1 15.5 H19" stroke-width="1.5"/></g></g>
<g style="color:#f2f2f2"><g transform="translate(1368.80,1034.00) scale(0.9)" fill="none" stroke="#f2f2f2" stroke-width="1.3" stroke-linecap="butt" stroke-linejoin="miter"><path d="M4.5 1 V19 M10 1 V9 M15.5 1 V9 M1 4.5 H19 M1 10 H8 M1 15.5 H8" stroke-width="1.5"/><path d="M9 10 H13.5 A4.3 4.3 0 0 1 13.5 18.6 H9 M9 12.6 H13.5 A1.7 1.7 0 0 1 13.5 16 H9" stroke-width="1.3"/></g></g>
<g style="color:#f2f2f2"><g transform="translate(1405.40,1034.00) scale(0.9)" fill="none" stroke="#f2f2f2" stroke-width="1.3" stroke-linecap="butt" stroke-linejoin="miter"><path d="M3 1.5 H12 L16 5.5 V9 M7 18.5 H3 V1.5 M12 1.5 V5.5 H16"/><path d="M9 10 H13.5 A4.3 4.3 0 0 1 13.5 18.6 H9 M9 12.6 H13.5 A1.7 1.7 0 0 1 13.5 16 H9" stroke-width="1.3"/></g></g>
<g style="color:#f2f2f2"><g transform="translate(1441.30,1034.00) scale(0.9)" fill="none" stroke="#f2f2f2" stroke-width="1.3" stroke-linecap="butt" stroke-linejoin="miter"><path d="M2 15 L11 4 L13 2 L16.5 5.5 L14 8 M2 15 L4 17 M1 16 L3 18"/><path d="M9 10 H13.5 A4.3 4.3 0 0 1 13.5 18.6 H9 M9 12.6 H13.5 A1.7 1.7 0 0 1 13.5 16 H9" stroke-width="1.3"/></g></g>
<g style="color:#f2f2f2"><g transform="translate(1477.60,1034.00) scale(0.9)" fill="none" stroke="#f2f2f2" stroke-width="1.3" stroke-linecap="butt" stroke-linejoin="miter"><path d="M2 15 L11 4 L13 2 L16.5 5.5 L10 12 M2 15 L4 17 M1 16 L3 18"/><path d="M16.5 12 A4 4 0 1 1 13 10" stroke="#2f8ae0" stroke-width="1.8"/><path d="M12 8 L15 10 L12.5 12.5 Z" fill="#2f8ae0" stroke="#2f8ae0"/></g></g>
<g style="color:#f2f2f2"><g transform="translate(1512.60,1034.00) scale(0.9)" fill="none" stroke="#f2f2f2" stroke-width="1.3" stroke-linecap="butt" stroke-linejoin="miter"><rect x="1.5" y="1.5" width="17" height="17"/><path d="M1.5 4 H18.5 M4 9 H16 M13.5 6.5 L16 9 L13.5 11.5 M16 14 H4 M6.5 11.5 L4 14 L6.5 16.5"/></g></g>
<g style="color:#e0e0e0"><g transform="translate(1542.00,1038.00) scale(0.55)" fill="none" stroke="#e0e0e0" stroke-width="1.5" stroke-linecap="butt" stroke-linejoin="miter"><path d="M4 7 L10 13 L16 7"/></g></g>
<text x="1556.90" y="1048.40" font-family="Liberation Sans" font-size="13.66" font-weight="normal" fill="#ececec" text-anchor="start" textLength="71.85" lengthAdjust="spacingAndGlyphs" >Scale Not Set</text>
<text x="1661.25" y="1048.40" font-family="Liberation Sans" font-size="13.66" font-weight="normal" fill="#ececec" text-anchor="start" textLength="79.00" lengthAdjust="spacingAndGlyphs" >11.00 x 8.50 in</text>
<text x="1810.00" y="1048.40" font-family="Liberation Sans" font-size="13.66" font-weight="normal" fill="#ececec" text-anchor="start" textLength="60.90" lengthAdjust="spacingAndGlyphs" >(6.65, 5.53)</text>
<rect x="415" y="190" width="1037" height="799" fill="#ffffff" />
<rect x="415" y="190" width="2" height="799" fill="#0e5a9a" />
<rect x="1450" y="190" width="2" height="799" fill="#bfeffd" />
<rect x="428.6" y="202.6" width="1009" height="773.4" fill="none" stroke="#000" stroke-width="1.3"/>
<text x="714.40" y="261.70" font-family="Liberation Sans" font-size="23.26" font-weight="normal" fill="#a3a3a3" text-anchor="start" textLength="436.00" lengthAdjust="spacingAndGlyphs" >SUMMARY OF CHANGE ANALYTICS BY UPDATE</text>
<text x="1216.70" y="234.00" font-family="Liberation Sans" font-size="11.77" font-weight="normal" fill="#3c3c3c" text-anchor="start" textLength="157.80" lengthAdjust="spacingAndGlyphs" >PLANSET: ELEMENTARY SCHOOL</text>
<rect x="1216" y="235" width="159" height="1.1" fill="#3c3c3c" />
<text x="1216.10" y="268.10" font-family="Liberation Sans" font-size="11.77" font-weight="normal" fill="#3c3c3c" text-anchor="start" textLength="158.90" lengthAdjust="spacingAndGlyphs" >SET DATE: FEBRUARY 11, 2020</text>
<text x="456.70" y="957.80" font-family="Liberation Sans" font-size="13.81" font-weight="normal" fill="#5a5a5a" text-anchor="start" textLength="71.30" lengthAdjust="spacingAndGlyphs" >PAGE 1 OF 1</text>
<rect x="451" y="298" width="958" height="3" fill="#000" />
<rect x="451" y="389" width="958" height="2" fill="#000" />
<rect x="451" y="456" width="958" height="3" fill="#000" />
<rect x="451" y="527" width="958" height="2.4" fill="#000" />
<rect x="451" y="597" width="958" height="3" fill="#000" />
<rect x="658" y="311" width="1.3" height="72" fill="#000" />
<rect x="1079" y="311" width="2.2" height="72" fill="#000" />
<rect x="1192.8" y="311" width="1.4" height="72" fill="#000" />
<rect x="1317.8" y="311" width="1.4" height="72" fill="#000" />
<rect x="658" y="398" width="1.3" height="36" fill="#000" />
<rect x="1079" y="398" width="2.2" height="36" fill="#000" />
<rect x="1192.8" y="398" width="1.4" height="36" fill="#000" />
<rect x="1317.8" y="398" width="1.4" height="36" fill="#000" />
<rect x="658" y="469" width="1.3" height="36" fill="#000" />
<rect x="1079" y="469" width="2.2" height="36" fill="#000" />
<rect x="1192.8" y="469" width="1.4" height="36" fill="#000" />
<rect x="1317.8" y="469" width="1.4" height="36" fill="#000" />
<rect x="658" y="539" width="1.3" height="37" fill="#000" />
<rect x="1079" y="539" width="2.2" height="37" fill="#000" />
<rect x="1192.8" y="539" width="1.4" height="37" fill="#000" />
<rect x="1317.8" y="539" width="1.4" height="37" fill="#000" />
<text x="474.30" y="323.50" font-family="Liberation Sans" font-size="14.53" font-weight="bold" fill="#111111" text-anchor="start" textLength="153.00" lengthAdjust="spacingAndGlyphs" >UPDATE INFORMATION</text>
<text x="455.30" y="349.80" font-family="Liberation Sans" font-size="13.23" font-weight="bold" fill="#111111" text-anchor="start" textLength="84.70" lengthAdjust="spacingAndGlyphs" >DRAWING SET</text>
<text x="451.30" y="367.10" font-family="Liberation Sans" font-size="13.23" font-weight="bold" fill="#111111" text-anchor="start" textLength="92.60" lengthAdjust="spacingAndGlyphs" >RECEIVED DATE</text>
<text x="553.00" y="349.80" font-family="Liberation Sans" font-size="13.23" font-weight="bold" fill="#111111" text-anchor="start" textLength="97.60" lengthAdjust="spacingAndGlyphs" ># OF DRAWINGS</text>
<text x="574.90" y="367.10" font-family="Liberation Sans" font-size="13.23" font-weight="bold" fill="#111111" text-anchor="start" textLength="57.10" lengthAdjust="spacingAndGlyphs" >RECEIVED</text>
<text x="697.00" y="327.40" font-family="Liberation Sans" font-size="13.95" font-weight="bold" fill="#7f7f7f" text-anchor="start" textLength="345.90" lengthAdjust="spacingAndGlyphs" ># OF GRIDS REPORTING CHANGE, OUT OF # OF GRIDS</text>
<text x="694.00" y="358.80" font-family="Liberation Sans" font-size="13.81" font-weight="bold" fill="#111111" text-anchor="start" textLength="355.40" lengthAdjust="spacingAndGlyphs" ># OF UPDATED DRAWINGS BY % OF CONTENT CHANGE</text>
<text x="688.90" y="382.20" font-family="Liberation Sans" font-size="13.95" font-weight="bold" fill="#111111" text-anchor="start" textLength="18.50" lengthAdjust="spacingAndGlyphs" >0%</text>
<text x="747.00" y="382.20" font-family="Liberation Sans" font-size="13.95" font-weight="bold" fill="#1f9a48" text-anchor="start" textLength="39.00" lengthAdjust="spacingAndGlyphs" >1-20%</text>
<text x="811.00" y="382.20" font-family="Liberation Sans" font-size="13.95" font-weight="bold" fill="#1180f0" text-anchor="start" textLength="47.20" lengthAdjust="spacingAndGlyphs" >21-40%</text>
<text x="879.40" y="382.20" font-family="Liberation Sans" font-size="13.95" font-weight="bold" fill="#c9bf0a" text-anchor="start" textLength="47.00" lengthAdjust="spacingAndGlyphs" >41-60%</text>
<text x="947.70" y="382.20" font-family="Liberation Sans" font-size="13.95" font-weight="bold" fill="#f58a1f" text-anchor="start" textLength="47.40" lengthAdjust="spacingAndGlyphs" >61-80%</text>
<text x="1011.80" y="382.20" font-family="Liberation Sans" font-size="13.95" font-weight="bold" fill="#e8231e" text-anchor="start" textLength="55.70" lengthAdjust="spacingAndGlyphs" >81-100%</text>
<text x="1122.00" y="335.20" font-family="Liberation Sans" font-size="13.66" font-weight="bold" fill="#111111" text-anchor="start" textLength="28.00" lengthAdjust="spacingAndGlyphs" ># OF</text>
<text x="1102.80" y="354.20" font-family="Liberation Sans" font-size="13.66" font-weight="bold" fill="#111111" text-anchor="start" textLength="67.00" lengthAdjust="spacingAndGlyphs" >OVERLAYS</text>
<text x="1086.90" y="382.30" font-family="Liberation Sans" font-size="13.95" font-weight="bold" fill="#1f9a48" text-anchor="start" textLength="45.10" lengthAdjust="spacingAndGlyphs" >SINGLE</text>
<text x="1144.50" y="382.30" font-family="Liberation Sans" font-size="13.95" font-weight="bold" fill="#e8231e" text-anchor="start" textLength="41.30" lengthAdjust="spacingAndGlyphs" >MULTI</text>
<text x="1217.60" y="323.40" font-family="Liberation Sans" font-size="13.95" font-weight="bold" fill="#111111" text-anchor="start" textLength="77.20" lengthAdjust="spacingAndGlyphs" >DOCUMENT</text>
<text x="1226.90" y="342.50" font-family="Liberation Sans" font-size="13.95" font-weight="bold" fill="#111111" text-anchor="start" textLength="61.90" lengthAdjust="spacingAndGlyphs" >CONTROL</text>
<text x="1204.40" y="361.70" font-family="Liberation Sans" font-size="13.95" font-weight="bold" fill="#111111" text-anchor="start" textLength="106.60" lengthAdjust="spacingAndGlyphs" ># OF DRAWINGS</text>
<text x="1199.80" y="382.00" font-family="Liberation Sans" font-size="13.95" font-weight="bold" fill="#1f9a48" text-anchor="start" textLength="45.90" lengthAdjust="spacingAndGlyphs" >ADDED</text>
<text x="1259.20" y="382.00" font-family="Liberation Sans" font-size="13.95" font-weight="bold" fill="#e8231e" text-anchor="start" textLength="55.60" lengthAdjust="spacingAndGlyphs" >DELETED</text>
<text x="1339.70" y="331.40" font-family="Liberation Sans" font-size="13.95" font-weight="bold" fill="#ef8632" text-anchor="start" textLength="55.30" lengthAdjust="spacingAndGlyphs" >CHANGE</text>
<text x="1332.00" y="350.30" font-family="Liberation Sans" font-size="13.95" font-weight="bold" fill="#ef8632" text-anchor="start" textLength="71.20" lengthAdjust="spacingAndGlyphs" >ANALYTICS</text>
<text x="1349.30" y="369.50" font-family="Liberation Sans" font-size="13.95" font-weight="bold" fill="#ef8632" text-anchor="start" textLength="40.20" lengthAdjust="spacingAndGlyphs" >INDEX</text>
<text x="489.95" y="408.00" font-family="Liberation Sans" font-size="11.34" font-weight="bold" fill="#111111" text-anchor="start" textLength="15.30" lengthAdjust="spacingAndGlyphs" >DD</text>
<text x="592.25" y="423.00" font-family="Liberation Sans" font-size="14.53" font-weight="bold" fill="#111111" text-anchor="start" textLength="22.70" lengthAdjust="spacingAndGlyphs" >112</text>
<text x="456.50" y="447.90" font-family="Liberation Sans" font-size="10.17" font-weight="normal" fill="#222" text-anchor="start" textLength="82.20" lengthAdjust="spacingAndGlyphs" >December 06, 2019</text>
<text x="689.95" y="407.90" font-family="Liberation Sans" font-size="11.05" font-weight="bold" fill="#7f7f7f" text-anchor="start" textLength="16.70" lengthAdjust="spacingAndGlyphs" >NO</text>
<text x="685.40" y="423.75" font-family="Liberation Sans" font-size="11.05" font-weight="bold" fill="#7f7f7f" text-anchor="start" textLength="25.80" lengthAdjust="spacingAndGlyphs" >INFO</text>
<text x="694.50" y="445.80" font-family="Liberation Sans" font-size="13.95" font-weight="bold" fill="#111111" text-anchor="start" textLength="7.60" lengthAdjust="spacingAndGlyphs" >0</text>
<text x="758.25" y="407.90" font-family="Liberation Sans" font-size="11.05" font-weight="bold" fill="#7f7f7f" text-anchor="start" textLength="16.70" lengthAdjust="spacingAndGlyphs" >NO</text>
<text x="753.70" y="423.75" font-family="Liberation Sans" font-size="11.05" font-weight="bold" fill="#7f7f7f" text-anchor="start" textLength="25.80" lengthAdjust="spacingAndGlyphs" >INFO</text>
<text x="762.80" y="445.80" font-family="Liberation Sans" font-size="13.95" font-weight="bold" fill="#1f9a48" text-anchor="start" textLength="7.60" lengthAdjust="spacingAndGlyphs" >0</text>
<text x="826.65" y="407.90" font-family="Liberation Sans" font-size="11.05" font-weight="bold" fill="#7f7f7f" text-anchor="start" textLength="16.70" lengthAdjust="spacingAndGlyphs" >NO</text>
<text x="822.10" y="423.75" font-family="Liberation Sans" font-size="11.05" font-weight="bold" fill="#7f7f7f" text-anchor="start" textLength="25.80" lengthAdjust="spacingAndGlyphs" >INFO</text>
<text x="831.20" y="445.80" font-family="Liberation Sans" font-size="13.95" font-weight="bold" fill="#1180f0" text-anchor="start" textLength="7.60" lengthAdjust="spacingAndGlyphs" >0</text>
<text x="894.95" y="407.90" font-family="Liberation Sans" font-size="11.05" font-weight="bold" fill="#7f7f7f" text-anchor="start" textLength="16.70" lengthAdjust="spacingAndGlyphs" >NO</text>
<text x="890.40" y="423.75" font-family="Liberation Sans" font-size="11.05" font-weight="bold" fill="#7f7f7f" text-anchor="start" textLength="25.80" lengthAdjust="spacingAndGlyphs" >INFO</text>
<text x="899.50" y="445.80" font-family="Liberation Sans" font-size="13.95" font-weight="bold" fill="#c9bf0a" text-anchor="start" textLength="7.60" lengthAdjust="spacingAndGlyphs" >0</text>
<text x="963.25" y="407.90" font-family="Liberation Sans" font-size="11.05" font-weight="bold" fill="#7f7f7f" text-anchor="start" textLength="16.70" lengthAdjust="spacingAndGlyphs" >NO</text>
<text x="958.70" y="423.75" font-family="Liberation Sans" font-size="11.05" font-weight="bold" fill="#7f7f7f" text-anchor="start" textLength="25.80" lengthAdjust="spacingAndGlyphs" >INFO</text>
<text x="967.80" y="445.80" font-family="Liberation Sans" font-size="13.95" font-weight="bold" fill="#f58a1f" text-anchor="start" textLength="7.60" lengthAdjust="spacingAndGlyphs" >0</text>
<text x="1031.65" y="407.90" font-family="Liberation Sans" font-size="11.05" font-weight="bold" fill="#7f7f7f" text-anchor="start" textLength="16.70" lengthAdjust="spacingAndGlyphs" >NO</text>
<text x="1027.10" y="423.75" font-family="Liberation Sans" font-size="11.05" font-weight="bold" fill="#7f7f7f" text-anchor="start" textLength="25.80" lengthAdjust="spacingAndGlyphs" >INFO</text>
<text x="1036.20" y="445.80" font-family="Liberation Sans" font-size="13.95" font-weight="bold" fill="#e8231e" text-anchor="start" textLength="7.60" lengthAdjust="spacingAndGlyphs" >0</text>
<text x="1106.20" y="422.60" font-family="Liberation Sans" font-size="13.95" font-weight="bold" fill="#1f9a48" text-anchor="start" textLength="7.60" lengthAdjust="spacingAndGlyphs" >0</text>
<text x="1161.60" y="422.60" font-family="Liberation Sans" font-size="13.95" font-weight="bold" fill="#e8231e" text-anchor="start" textLength="7.60" lengthAdjust="spacingAndGlyphs" >0</text>
<text x="1220.50" y="422.60" font-family="Liberation Sans" font-size="13.95" font-weight="bold" fill="#1f9a48" text-anchor="start" textLength="7.60" lengthAdjust="spacingAndGlyphs" >0</text>
<text x="1282.90" y="422.60" font-family="Liberation Sans" font-size="13.95" font-weight="bold" fill="#e8231e" text-anchor="start" textLength="7.60" lengthAdjust="spacingAndGlyphs" >0</text>
<text x="477.20" y="479.30" font-family="Liberation Sans" font-size="12.06" font-weight="bold" fill="#111111" text-anchor="start" textLength="40.60" lengthAdjust="spacingAndGlyphs" >80% CD</text>
<text x="592.00" y="493.30" font-family="Liberation Sans" font-size="14.53" font-weight="bold" fill="#111111" text-anchor="start" textLength="23.00" lengthAdjust="spacingAndGlyphs" >150</text>
<text x="456.60" y="519.00" font-family="Liberation Sans" font-size="10.17" font-weight="normal" fill="#222" text-anchor="start" textLength="82.60" lengthAdjust="spacingAndGlyphs" >December 09, 2019</text>
<text x="686.45" y="478.60" font-family="Liberation Sans" font-size="11.34" font-weight="bold" fill="#7f7f7f" text-anchor="start" textLength="23.70" lengthAdjust="spacingAndGlyphs" >0 OF</text>
<text x="688.65" y="494.60" font-family="Liberation Sans" font-size="11.34" font-weight="bold" fill="#7f7f7f" text-anchor="start" textLength="19.30" lengthAdjust="spacingAndGlyphs" >128</text>
<text x="694.65" y="516.30" font-family="Liberation Sans" font-size="13.95" font-weight="bold" fill="#111111" text-anchor="start" textLength="7.30" lengthAdjust="spacingAndGlyphs" >8</text>
<text x="751.10" y="478.60" font-family="Liberation Sans" font-size="11.34" font-weight="bold" fill="#7f7f7f" text-anchor="start" textLength="31.00" lengthAdjust="spacingAndGlyphs" >55 OF</text>
<text x="756.95" y="494.60" font-family="Liberation Sans" font-size="11.34" font-weight="bold" fill="#7f7f7f" text-anchor="start" textLength="19.30" lengthAdjust="spacingAndGlyphs" >217</text>
<text x="759.10" y="516.30" font-family="Liberation Sans" font-size="13.95" font-weight="bold" fill="#1f9a48" text-anchor="start" textLength="15.00" lengthAdjust="spacingAndGlyphs" >14</text>
<text x="816.50" y="478.60" font-family="Liberation Sans" font-size="11.34" font-weight="bold" fill="#7f7f7f" text-anchor="start" textLength="37.00" lengthAdjust="spacingAndGlyphs" >138 OF</text>
<text x="825.35" y="494.60" font-family="Liberation Sans" font-size="11.34" font-weight="bold" fill="#7f7f7f" text-anchor="start" textLength="19.30" lengthAdjust="spacingAndGlyphs" >242</text>
<text x="827.50" y="516.30" font-family="Liberation Sans" font-size="13.95" font-weight="bold" fill="#1180f0" text-anchor="start" textLength="15.00" lengthAdjust="spacingAndGlyphs" >16</text>
<text x="884.80" y="478.60" font-family="Liberation Sans" font-size="11.34" font-weight="bold" fill="#7f7f7f" text-anchor="start" textLength="37.00" lengthAdjust="spacingAndGlyphs" >240 OF</text>
<text x="893.65" y="494.60" font-family="Liberation Sans" font-size="11.34" font-weight="bold" fill="#7f7f7f" text-anchor="start" textLength="19.30" lengthAdjust="spacingAndGlyphs" >393</text>
<text x="895.80" y="516.30" font-family="Liberation Sans" font-size="13.95" font-weight="bold" fill="#c9bf0a" text-anchor="start" textLength="15.00" lengthAdjust="spacingAndGlyphs" >25</text>
<text x="953.10" y="478.60" font-family="Liberation Sans" font-size="11.34" font-weight="bold" fill="#7f7f7f" text-anchor="start" textLength="37.00" lengthAdjust="spacingAndGlyphs" >188 OF</text>
<text x="961.95" y="494.60" font-family="Liberation Sans" font-size="11.34" font-weight="bold" fill="#7f7f7f" text-anchor="start" textLength="19.30" lengthAdjust="spacingAndGlyphs" >240</text>
<text x="964.10" y="516.30" font-family="Liberation Sans" font-size="13.95" font-weight="bold" fill="#f58a1f" text-anchor="start" textLength="15.00" lengthAdjust="spacingAndGlyphs" >15</text>
<text x="1021.50" y="478.60" font-family="Liberation Sans" font-size="11.34" font-weight="bold" fill="#7f7f7f" text-anchor="start" textLength="37.00" lengthAdjust="spacingAndGlyphs" >238 OF</text>
<text x="1030.35" y="494.60" font-family="Liberation Sans" font-size="11.34" font-weight="bold" fill="#7f7f7f" text-anchor="start" textLength="19.30" lengthAdjust="spacingAndGlyphs" >256</text>
<text x="1032.50" y="516.30" font-family="Liberation Sans" font-size="13.95" font-weight="bold" fill="#e8231e" text-anchor="start" textLength="15.00" lengthAdjust="spacingAndGlyphs" >16</text>
<text x="1102.50" y="493.30" font-family="Liberation Sans" font-size="13.95" font-weight="bold" fill="#1f9a48" text-anchor="start" textLength="15.00" lengthAdjust="spacingAndGlyphs" >78</text>
<text x="1157.90" y="493.30" font-family="Liberation Sans" font-size="13.95" font-weight="bold" fill="#e8231e" text-anchor="start" textLength="15.00" lengthAdjust="spacingAndGlyphs" >16</text>
<text x="1216.80" y="493.30" font-family="Liberation Sans" font-size="13.95" font-weight="bold" fill="#1f9a48" text-anchor="start" textLength="15.00" lengthAdjust="spacingAndGlyphs" >56</text>
<text x="1283.05" y="493.30" font-family="Liberation Sans" font-size="13.95" font-weight="bold" fill="#e8231e" text-anchor="start" textLength="7.30" lengthAdjust="spacingAndGlyphs" >1</text>
<text x="471.80" y="550.20" font-family="Liberation Sans" font-size="12.06" font-weight="bold" fill="#111111" text-anchor="start" textLength="51.40" lengthAdjust="spacingAndGlyphs" >BID DOCS</text>
<text x="592.00" y="564.30" font-family="Liberation Sans" font-size="14.53" font-weight="bold" fill="#111111" text-anchor="start" textLength="23.00" lengthAdjust="spacingAndGlyphs" >161</text>
<text x="458.80" y="589.50" font-family="Liberation Sans" font-size="10.17" font-weight="normal" fill="#222" text-anchor="start" textLength="77.40" lengthAdjust="spacingAndGlyphs" >February 11, 2020</text>
<text x="686.45" y="549.30" font-family="Liberation Sans" font-size="11.34" font-weight="bold" fill="#7f7f7f" text-anchor="start" textLength="23.70" lengthAdjust="spacingAndGlyphs" >0 OF</text>
<text x="688.65" y="565.00" font-family="Liberation Sans" font-size="11.34" font-weight="bold" fill="#7f7f7f" text-anchor="start" textLength="19.30" lengthAdjust="spacingAndGlyphs" >694</text>
<text x="690.80" y="587.00" font-family="Liberation Sans" font-size="13.95" font-weight="bold" fill="#111111" text-anchor="start" textLength="15.00" lengthAdjust="spacingAndGlyphs" >46</text>
<text x="751.10" y="549.30" font-family="Liberation Sans" font-size="11.34" font-weight="bold" fill="#7f7f7f" text-anchor="start" textLength="31.00" lengthAdjust="spacingAndGlyphs" >16 OF</text>
<text x="756.95" y="565.00" font-family="Liberation Sans" font-size="11.34" font-weight="bold" fill="#7f7f7f" text-anchor="start" textLength="19.30" lengthAdjust="spacingAndGlyphs" >114</text>
<text x="762.95" y="587.00" font-family="Liberation Sans" font-size="13.95" font-weight="bold" fill="#1f9a48" text-anchor="start" textLength="7.30" lengthAdjust="spacingAndGlyphs" >8</text>
<text x="819.50" y="549.30" font-family="Liberation Sans" font-size="11.34" font-weight="bold" fill="#7f7f7f" text-anchor="start" textLength="31.00" lengthAdjust="spacingAndGlyphs" >82 OF</text>
<text x="825.35" y="565.00" font-family="Liberation Sans" font-size="11.34" font-weight="bold" fill="#7f7f7f" text-anchor="start" textLength="19.30" lengthAdjust="spacingAndGlyphs" >212</text>
<text x="827.50" y="587.00" font-family="Liberation Sans" font-size="13.95" font-weight="bold" fill="#1180f0" text-anchor="start" textLength="15.00" lengthAdjust="spacingAndGlyphs" >15</text>
<text x="884.80" y="549.30" font-family="Liberation Sans" font-size="11.34" font-weight="bold" fill="#7f7f7f" text-anchor="start" textLength="37.00" lengthAdjust="spacingAndGlyphs" >222 OF</text>
<text x="893.65" y="565.00" font-family="Liberation Sans" font-size="11.34" font-weight="bold" fill="#7f7f7f" text-anchor="start" textLength="19.30" lengthAdjust="spacingAndGlyphs" >390</text>
<text x="895.80" y="587.00" font-family="Liberation Sans" font-size="13.95" font-weight="bold" fill="#c9bf0a" text-anchor="start" textLength="15.00" lengthAdjust="spacingAndGlyphs" >27</text>
<text x="953.10" y="549.30" font-family="Liberation Sans" font-size="11.34" font-weight="bold" fill="#7f7f7f" text-anchor="start" textLength="37.00" lengthAdjust="spacingAndGlyphs" >369 OF</text>
<text x="961.95" y="565.00" font-family="Liberation Sans" font-size="11.34" font-weight="bold" fill="#7f7f7f" text-anchor="start" textLength="19.30" lengthAdjust="spacingAndGlyphs" >418</text>
<text x="964.10" y="587.00" font-family="Liberation Sans" font-size="13.95" font-weight="bold" fill="#f58a1f" text-anchor="start" textLength="15.00" lengthAdjust="spacingAndGlyphs" >27</text>
<text x="1021.50" y="549.30" font-family="Liberation Sans" font-size="11.34" font-weight="bold" fill="#7f7f7f" text-anchor="start" textLength="37.00" lengthAdjust="spacingAndGlyphs" >258 OF</text>
<text x="1030.35" y="565.00" font-family="Liberation Sans" font-size="11.34" font-weight="bold" fill="#7f7f7f" text-anchor="start" textLength="19.30" lengthAdjust="spacingAndGlyphs" >288</text>
<text x="1032.50" y="587.00" font-family="Liberation Sans" font-size="13.95" font-weight="bold" fill="#e8231e" text-anchor="start" textLength="15.00" lengthAdjust="spacingAndGlyphs" >18</text>
<rect x="1333.6" y="476.8" width="60.2" height="24" fill="#bdf0fb" />
<rect x="1329.7" y="500.40000000000003" width="66" height="4.2" fill="#ec7f32" />
<text x="1348.30" y="495.00" font-family="Liberation Sans" font-size="12.79" font-weight="bold" fill="#111111" text-anchor="start" textLength="31.00" lengthAdjust="spacingAndGlyphs" >VIEW</text>
<rect x="1333.6" y="547.1" width="60.2" height="24" fill="#bdf0fb" />
<rect x="1329.7" y="570.7" width="66" height="4.2" fill="#ec7f32" />
<text x="1348.30" y="565.50" font-family="Liberation Sans" font-size="12.79" font-weight="bold" fill="#111111" text-anchor="start" textLength="31.00" lengthAdjust="spacingAndGlyphs" >VIEW</text>
<text x="1098.75" y="563.60" font-family="Liberation Sans" font-size="13.95" font-weight="bold" fill="#1f9a48" text-anchor="start" textLength="22.50" lengthAdjust="spacingAndGlyphs" >122</text>
<text x="1157.90" y="563.60" font-family="Liberation Sans" font-size="13.95" font-weight="bold" fill="#e8231e" text-anchor="start" textLength="15.00" lengthAdjust="spacingAndGlyphs" >19</text>
<rect x="1192.2" y="527.1" width="126.4" height="70.3" rx="9" fill="#fff" stroke="#ff6a00" stroke-width="5.7" filter="url(#shadow)"/>
<rect x="1195" y="530" width="121" height="65" rx="6" fill="#fff" filter="url(#inset)"/>
<rect x="1192.2" y="527.1" width="126.4" height="70.3" rx="9" fill="none" stroke="#ff6a00" stroke-width="5.7"/>
<text x="1216.80" y="563.60" font-family="Liberation Sans" font-size="13.95" font-weight="bold" fill="#1f9a48" text-anchor="start" textLength="15.00" lengthAdjust="spacingAndGlyphs" >20</text>
<text x="1279.20" y="563.60" font-family="Liberation Sans" font-size="13.95" font-weight="bold" fill="#e8231e" text-anchor="start" textLength="15.00" lengthAdjust="spacingAndGlyphs" >27</text>
<g filter="url(#shadow)"><path d="M1253 616 V718 H1258 V616 Z" fill="#ff6a00"/><path d="M1255.5 604.5 L1266 616.5 H1245 Z" fill="#ff6a00"/></g>
<defs><radialGradient id="hg"><stop offset="0" stop-color="#fdd0ae"/><stop offset="0.9" stop-color="#fdd2b2"/><stop offset="1" stop-color="#fee3cf"/></radialGradient></defs>
<circle cx="1043.2" cy="708.2" r="28" fill="url(#hg)"/>
<rect x="1059.7" y="719" width="402" height="144" rx="10" fill="#fff" stroke="#ff6a00" stroke-width="6" filter="url(#shadow)"/>
<text x="1097.20" y="763.10" font-family="Liberation Sans" font-size="31.98" font-weight="bold" fill="#ff6a00" text-anchor="start" textLength="327.80" lengthAdjust="spacingAndGlyphs" >WE ALSO REPORT THE</text>
<text x="1080.80" y="799.20" font-family="Liberation Sans" font-size="31.98" font-weight="bold" fill="#ff6a00" text-anchor="start" textLength="361.70" lengthAdjust="spacingAndGlyphs" >NUMBER OF DRAWINGS</text>
<text x="1093.80" y="835.20" font-family="Liberation Sans" font-size="31.98" font-weight="bold" fill="#0fcc2a" text-anchor="start" textLength="107.00" lengthAdjust="spacingAndGlyphs" >ADDED</text>
<text x="1210.50" y="835.20" font-family="Liberation Sans" font-size="31.98" font-weight="bold" fill="#ff6a00" text-anchor="start" textLength="67.20" lengthAdjust="spacingAndGlyphs" >AND</text>
<text x="1288.00" y="835.20" font-family="Liberation Sans" font-size="31.98" font-weight="bold" fill="#f01400" text-anchor="start" textLength="130.80" lengthAdjust="spacingAndGlyphs" >DELETED</text>
<text x="1420.00" y="835.20" font-family="Liberation Sans" font-size="31.98" font-weight="bold" fill="#ff6a00" text-anchor="start" textLength="5.80" lengthAdjust="spacingAndGlyphs" >.</text>
<rect x="1093" y="840.2" width="109" height="2.6" fill="#0fcc2a" />
<rect x="1288" y="840.2" width="131" height="2.6" fill="#f01400" />
<g transform="translate(1034,699) scale(0.9)" fill="#cbcbcb" stroke="#111" stroke-width="1.7" stroke-linejoin="round"><path d="M6 17 Q4 14 2 11.5 Q1.3 10 3 9.8 L6 12 V4.5 Q6 3 7.3 3 Q8.5 3 8.5 4.5 V9 V2.5 Q8.5 1 9.8 1 Q11 1 11 2.5 V9 V3 Q11 1.8 12.3 1.8 Q13.6 1.8 13.6 3.2 V9.5 L14.8 5.5 Q15.3 4.5 16.3 5 Q17 5.5 16.7 6.5 L14.5 14 Q13.5 18 10 18 Q7.5 18 6 17 Z"/></g>
<circle cx="1056.7" cy="714.4" r="3.2" fill="#cbcbcb" stroke="#111" stroke-width="1.5"/>
</svg>
</body></html>
